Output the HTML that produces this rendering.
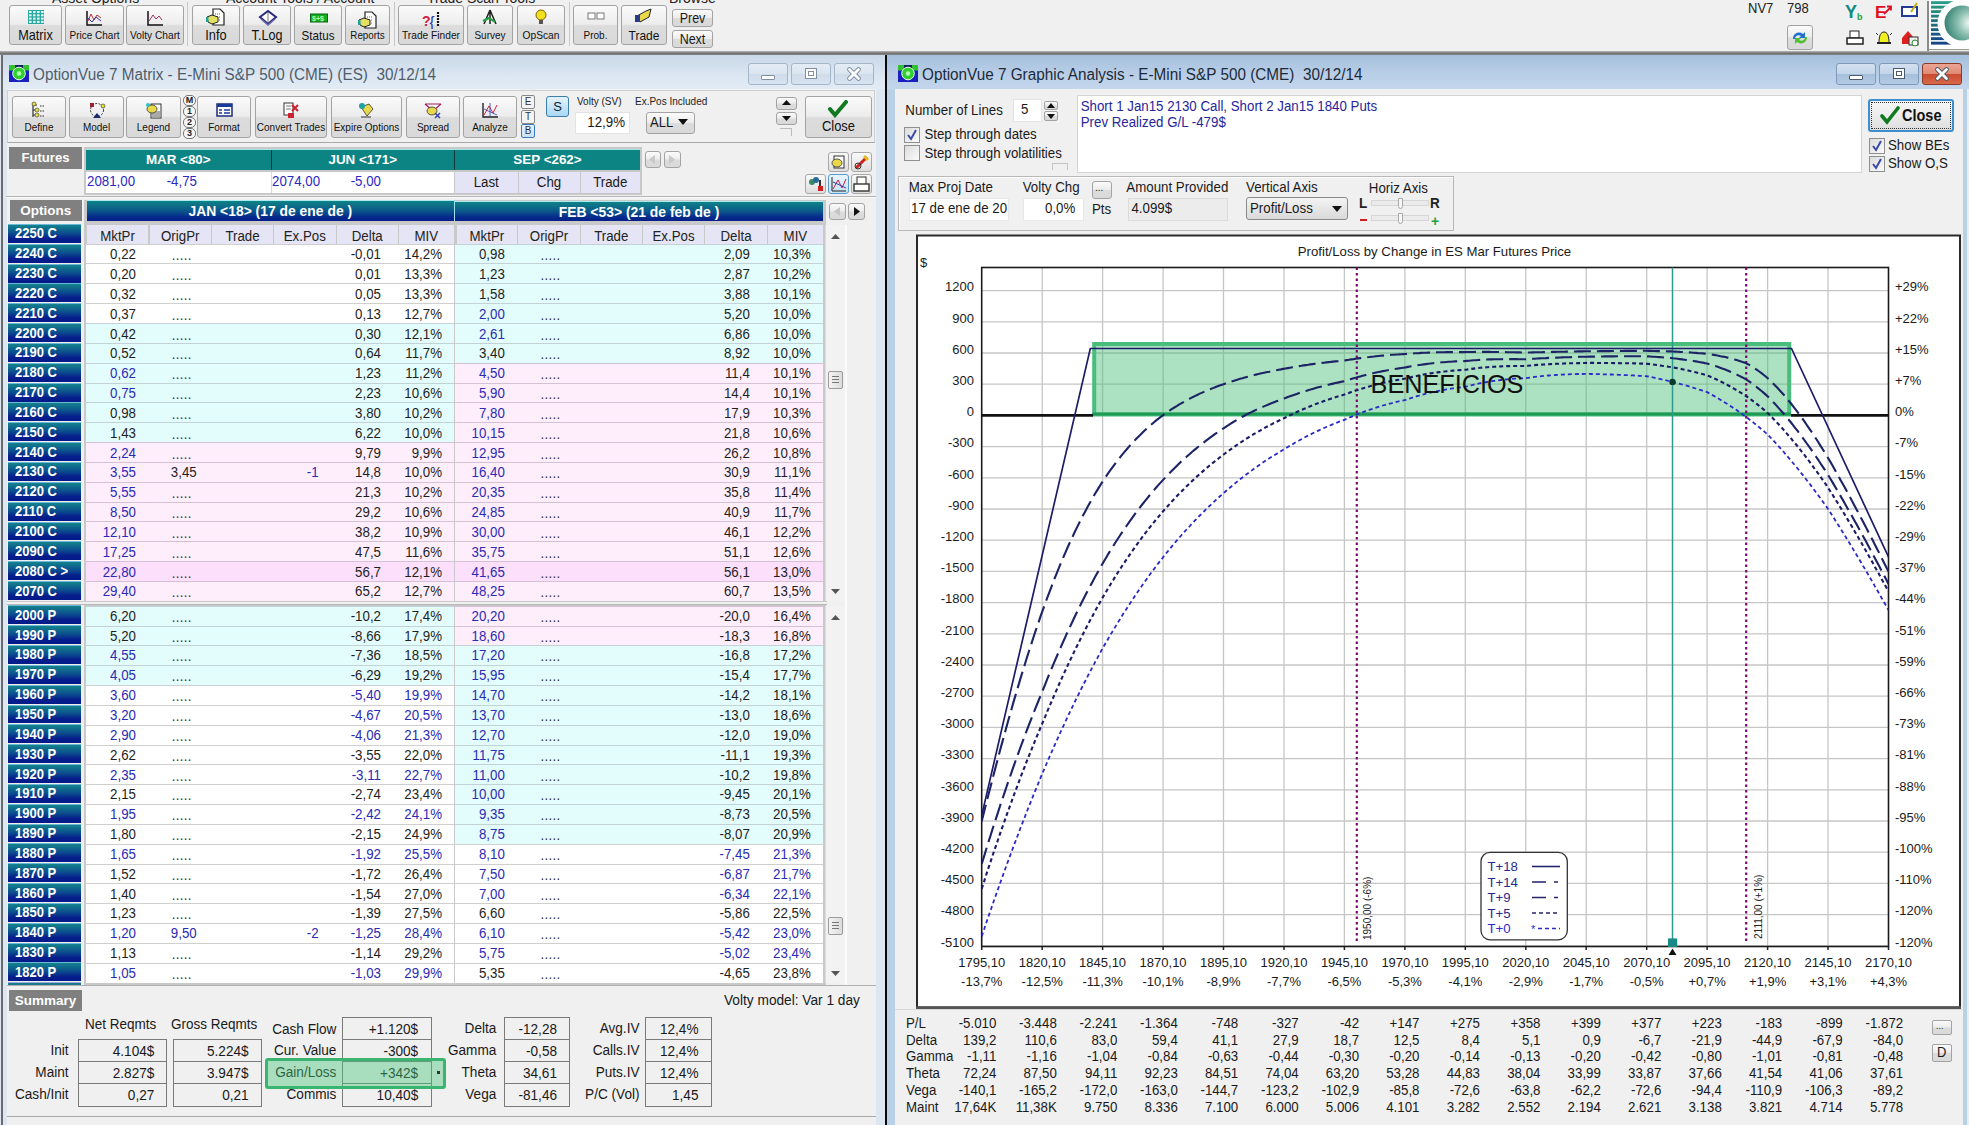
<!DOCTYPE html><html><head><meta charset="utf-8"><style>
html,body{margin:0;padding:0;}
body{width:1969px;height:1125px;position:relative;overflow:hidden;background:#f0f0f0;font-family:"Liberation Sans",sans-serif;color:#1a1a1a;}
div{box-sizing:border-box;}
.t{position:absolute;white-space:pre;height:20px;line-height:20px;font-size:13.3px;transform:scaleY(1.1);}
.btn{position:absolute;border:1px solid #a3a3a3;border-radius:3px;background:linear-gradient(#fbfbfb 0%,#ececec 48%,#dcdcdc 52%,#d9d9d9 100%);}
.tv{transform:scaleY(1.1);}
.hdr{position:absolute;color:#fff;font-weight:bold;font-size:13.3px;text-align:center;line-height:19px;}
</style></head><body>
<div class="t" style="left:52px;top:-13.5px;font-size:14px;color:#222;">Asset Options</div>
<div class="t" style="left:226px;top:-13.5px;font-size:14px;color:#222;">Account Tools / Account</div>
<div class="t" style="left:427px;top:-13.5px;font-size:14px;color:#222;">Trade Scan Tools</div>
<div class="t" style="left:669px;top:-13.5px;font-size:14px;color:#222;">Browse</div>
<div class="btn" style="left:9px;top:5px;width:53px;height:40px;"></div>
<div class="t" style="left:9px;width:53px;text-align:center;top:25.5px;font-size:12.7px;color:#111;">Matrix</div>
<svg style="position:absolute;left:26.0px;top:9.0px" width="20" height="18" viewBox="0 0 20 18"><rect x="2" y="1" width="16" height="14" fill="#2aa8a0"/><rect x="3" y="2.0" width="2.6" height="2" fill="#e8fff8"/><rect x="3" y="5.3" width="2.6" height="2" fill="#e8fff8"/><rect x="3" y="8.6" width="2.6" height="2" fill="#e8fff8"/><rect x="3" y="11.899999999999999" width="2.6" height="2" fill="#e8fff8"/><rect x="7" y="2.0" width="2.6" height="2" fill="#e8fff8"/><rect x="7" y="5.3" width="2.6" height="2" fill="#e8fff8"/><rect x="7" y="8.6" width="2.6" height="2" fill="#e8fff8"/><rect x="7" y="11.899999999999999" width="2.6" height="2" fill="#e8fff8"/><rect x="11" y="2.0" width="2.6" height="2" fill="#e8fff8"/><rect x="11" y="5.3" width="2.6" height="2" fill="#e8fff8"/><rect x="11" y="8.6" width="2.6" height="2" fill="#e8fff8"/><rect x="11" y="11.899999999999999" width="2.6" height="2" fill="#e8fff8"/><rect x="15" y="2.0" width="2.6" height="2" fill="#e8fff8"/><rect x="15" y="5.3" width="2.6" height="2" fill="#e8fff8"/><rect x="15" y="8.6" width="2.6" height="2" fill="#e8fff8"/><rect x="15" y="11.899999999999999" width="2.6" height="2" fill="#e8fff8"/></svg>
<div class="btn" style="left:65px;top:5px;width:59px;height:40px;"></div>
<div class="t" style="left:65px;width:59px;text-align:center;top:25.5px;font-size:10px;color:#111;">Price Chart</div>
<svg style="position:absolute;left:84.0px;top:9.0px" width="20" height="18" viewBox="0 0 20 18"><path d="M3 2 V16 H18" stroke="#111" stroke-width="1.5" fill="none"/><path d="M4 12 L7 5 L10 11 L13 6 L17 9" stroke="#c03030" fill="none"/><path d="M4 9 L8 13 L12 8 L17 12" stroke="#3030a0" fill="none"/></svg>
<div class="btn" style="left:126px;top:5px;width:58px;height:40px;"></div>
<div class="t" style="left:126px;width:58px;text-align:center;top:25.5px;font-size:10.2px;color:#111;">Volty Chart</div>
<svg style="position:absolute;left:145.0px;top:9.0px" width="20" height="18" viewBox="0 0 20 18"><path d="M3 2 V16 H18" stroke="#111" stroke-width="1.5" fill="none"/><path d="M4 12 L8 6 L11 10 L14 7 L17 11" stroke="#a03060" fill="none"/></svg>
<div style="position:absolute;left:187px;top:2px;width:1px;height:44px;background:#c8c8c8"></div>
<div class="btn" style="left:192px;top:5px;width:48px;height:40px;"></div>
<div class="t" style="left:192px;width:48px;text-align:center;top:25.5px;font-size:12.8px;color:#111;">Info</div>
<svg style="position:absolute;left:206.0px;top:8.0px" width="20" height="18" viewBox="0 0 20 18"><path d="M7 1 H14 L18 5 V17 H7 Z" fill="#fff" stroke="#222" stroke-width="1.2"/><path d="M9 6h6M9 9h6M9 12h6" stroke="#666" stroke-dasharray="1 1"/><path d="M1 9 L6 7 L12 9 L12 14 L6 16 L2 14 Z" fill="#e6e060" stroke="#222" stroke-width="1"/><rect x="0" y="9" width="2.5" height="5" fill="#20a0a0"/></svg>
<div class="btn" style="left:243px;top:5px;width:48px;height:40px;"></div>
<div class="t" style="left:243px;width:48px;text-align:center;top:25.5px;font-size:12.6px;color:#111;">T.Log</div>
<svg style="position:absolute;left:257.5px;top:9.0px" width="20" height="18" viewBox="0 0 20 18"><path d="M2 8 L10 2 L18 8 L10 15 Z" fill="#fff" stroke="#2a2a7a" stroke-width="2"/><path d="M3 10 L10 16 L17 10" fill="none" stroke="#6a6ab0" stroke-width="1.5"/><path d="M10 3 V14" stroke="#555" stroke-width=".8"/></svg>
<div class="btn" style="left:294px;top:5px;width:48px;height:40px;"></div>
<div class="t" style="left:294px;width:48px;text-align:center;top:25.5px;font-size:11.6px;color:#111;">Status</div>
<svg style="position:absolute;left:309.0px;top:9.0px" width="20" height="18" viewBox="0 0 20 18"><rect x="1.5" y="5" width="17" height="8" fill="#10b020" stroke="#086010"/><text x="3" y="12" font-size="7" fill="#b0ffb0" font-family="Liberation Sans" font-weight="bold">$+$</text></svg>
<div class="btn" style="left:345px;top:5px;width:45px;height:40px;"></div>
<div class="t" style="left:345px;width:45px;text-align:center;top:25.5px;font-size:9.8px;color:#111;">Reports</div>
<svg style="position:absolute;left:358.0px;top:10.5px" width="20" height="18" viewBox="0 0 20 18"><path d="M7 1 H14 L18 5 V17 H7 Z" fill="#fff" stroke="#222" stroke-width="1.2"/><path d="M9 6h6M9 9h6M9 12h6" stroke="#666" stroke-dasharray="1 1"/><path d="M1 9 L6 7 L12 9 L12 14 L6 16 L2 14 Z" fill="#e6e060" stroke="#222" stroke-width="1"/><rect x="0" y="9" width="2.5" height="5" fill="#20a0a0"/></svg>
<div style="position:absolute;left:394px;top:2px;width:1px;height:44px;background:#c8c8c8"></div>
<div class="btn" style="left:398px;top:5px;width:66px;height:40px;"></div>
<div class="t" style="left:398px;width:66px;text-align:center;top:25.5px;font-size:10.2px;color:#111;">Trade Finder</div>
<svg style="position:absolute;left:421.0px;top:10.5px" width="20" height="18" viewBox="0 0 20 18"><text x="1" y="15" font-size="14" font-weight="bold" fill="#d02040" font-family="Liberation Sans">?</text><text x="8.5" y="15.5" font-size="15" fill="#2a2ab0" font-family="Liberation Sans">{</text><path d="M17 1v15" stroke="#111" stroke-width="2.2" stroke-dasharray="2 1"/></svg>
<div class="btn" style="left:467px;top:5px;width:46px;height:40px;"></div>
<div class="t" style="left:467px;width:46px;text-align:center;top:25.5px;font-size:10px;color:#111;">Survey</div>
<svg style="position:absolute;left:480.0px;top:8.0px" width="20" height="18" viewBox="0 0 20 18"><path d="M10 2 L4 16 M10 2 L16 16 M10 2 V16" stroke="#222" stroke-width="1.5"/><path d="M3 13 L9 10 L15 14" stroke="#20a040" stroke-width="2" fill="none"/></svg>
<div class="btn" style="left:517px;top:5px;width:48px;height:40px;"></div>
<div class="t" style="left:517px;width:48px;text-align:center;top:25.5px;font-size:10.2px;color:#111;">OpScan</div>
<svg style="position:absolute;left:531.0px;top:8.0px" width="20" height="18" viewBox="0 0 20 18"><circle cx="10" cy="7" r="5" fill="#f0e020" stroke="#806000"/><rect x="8" y="12" width="4" height="4" fill="#555"/></svg>
<div style="position:absolute;left:569px;top:2px;width:1px;height:44px;background:#c8c8c8"></div>
<div class="btn" style="left:573px;top:5px;width:45px;height:40px;"></div>
<div class="t" style="left:573px;width:45px;text-align:center;top:25.5px;font-size:10px;color:#111;">Prob.</div>
<svg style="position:absolute;left:586.0px;top:8.0px" width="20" height="18" viewBox="0 0 20 18"><rect x="2" y="5" width="7" height="6" fill="#fff" stroke="#777"/><rect x="11" y="5" width="7" height="6" fill="#fff" stroke="#777"/></svg>
<div class="btn" style="left:621px;top:5px;width:46px;height:40px;"></div>
<div class="t" style="left:621px;width:46px;text-align:center;top:25.5px;font-size:12px;color:#111;">Trade</div>
<svg style="position:absolute;left:634.0px;top:7.0px" width="20" height="18" viewBox="0 0 20 18"><path d="M3 9 L12 4 L17 2 L15 10 L6 15 Z" fill="#e8d84a" stroke="#223"/><rect x="1" y="8" width="5" height="7" fill="#2a3a8a"/></svg>
<div class="btn" style="left:672px;top:9px;width:41px;height:18px;"></div><div class="t" style="left:672px;width:41px;text-align:center;top:9.3px;font-size:12.5px">Prev</div>
<div class="btn" style="left:672px;top:30px;width:41px;height:18px;"></div><div class="t" style="left:672px;width:41px;text-align:center;top:30.3px;font-size:12.5px">Next</div>
<div class="t" style="left:1748px;top:-1px;font-size:13px;color:#222">NV7</div><div class="t" style="left:1787px;top:-1px;font-size:13px;color:#222">798</div>
<div class="btn" style="left:1787px;top:25px;width:26px;height:25px;border-radius:3px"></div>
<svg style="position:absolute;left:1790.0px;top:29.0px" width="20" height="18" viewBox="0 0 20 18"><path d="M3 10 C3 4 9 2 13 5 L15 3 L15 9 L9 9 L11 7 C8 5 5 7 5 10 Z" fill="#2070d0"/><path d="M17 8 C17 14 11 16 7 13 L5 15 L5 9 L11 9 L9 11 C12 13 15 11 15 8 Z" fill="#50c030"/></svg>
<svg style="position:absolute;left:1845.0px;top:2.0px" width="20" height="18" viewBox="0 0 20 18"><text x="0" y="15.5" font-size="18" font-weight="bold" fill="#108a80" font-family="Liberation Sans">Y</text><text x="12" y="17.5" font-size="9" font-weight="bold" fill="#20a040" font-family="Liberation Sans">b</text></svg>
<svg style="position:absolute;left:1874.0px;top:2.0px" width="20" height="18" viewBox="0 0 20 18"><text x="1" y="15.5" font-size="17" font-weight="bold" fill="#e01020" font-family="Liberation Sans">E</text><path d="M10 12 L17 5 M13 4.5h4v4" stroke="#e01020" stroke-width="1.8" fill="none"/></svg>
<svg style="position:absolute;left:1900.0px;top:1.0px" width="20" height="18" viewBox="0 0 20 18"><rect x="2" y="6" width="15" height="9" fill="#fff" stroke="#223a9a" stroke-width="2"/><path d="M11 11 L17 2" stroke="#c0b010" stroke-width="2"/></svg>
<svg style="position:absolute;left:1845.0px;top:29.0px" width="20" height="18" viewBox="0 0 20 18"><rect x="5" y="2" width="9" height="7" fill="#fff" stroke="#222"/><rect x="2" y="9" width="16" height="6" fill="#fff" stroke="#222" stroke-width="1.5"/></svg>
<svg style="position:absolute;left:1874.0px;top:29.0px" width="20" height="18" viewBox="0 0 20 18"><path d="M5 14 C5 6 7 3 10 3 C13 3 15 6 15 14 Z" fill="#f0f020" stroke="#222"/><path d="M3 14h14" stroke="#222" stroke-width="2"/><path d="M2 4l2 2M18 4l-2 2" stroke="#333"/></svg>
<svg style="position:absolute;left:1900.0px;top:29.0px" width="20" height="18" viewBox="0 0 20 18"><path d="M2 9 L8 2 L14 9 V15 H2 Z" fill="#e02020"/><rect x="9" y="8" width="9" height="8" fill="#eee" stroke="#333"/><circle cx="15" cy="14" r="3" fill="#fff" stroke="#2a8a2a"/></svg>
<div style="position:absolute;left:1927px;top:1px;width:2px;height:50px;background:#8a8a8a"></div>
<svg style="position:absolute;left:1929px;top:0" width="40" height="50" viewBox="0 0 40 50"><rect x="0" y="0" width="40" height="50" fill="#ffffff"/><rect x="2" y="1.2" width="22" height="2.9" fill="#2a9a88"/><rect x="2" y="5.7" width="22" height="2.9" fill="#28907f"/><rect x="2" y="10.2" width="22" height="2.9" fill="#268a80"/><rect x="2" y="14.7" width="22" height="2.9" fill="#247f80"/><rect x="2" y="19.2" width="22" height="2.9" fill="#227580"/><rect x="2" y="23.7" width="22" height="2.9" fill="#1f6a82"/><rect x="2" y="28.2" width="22" height="2.9" fill="#1c5f84"/><rect x="2" y="32.7" width="22" height="2.9" fill="#1a5586"/><rect x="2" y="37.2" width="22" height="2.9" fill="#184c86"/><rect x="2" y="41.7" width="22" height="2.9" fill="#164484"/><circle cx="32" cy="23.5" r="23.5" fill="#fff"/><defs><radialGradient id="sph" cx="0.72" cy="0.5" r="0.75"><stop offset="0" stop-color="#f4fbf8"/><stop offset="0.45" stop-color="#8cc0b0"/><stop offset="1" stop-color="#2f7f70"/></radialGradient></defs><circle cx="33" cy="23" r="17.5" fill="url(#sph)"/><rect x="0" y="49" width="40" height="1.5" fill="#9a9a9a"/></svg>
<div style="position:absolute;left:0;top:51px;width:1969px;height:4px;background:linear-gradient(#b8b8b8,#6e6e6e 60%,#8a8a8a)"></div>
<div style="position:absolute;left:0;top:55px;width:886px;height:1070px;background:#dde7f1;"></div>
<div style="position:absolute;left:1px;top:55px;width:2px;height:1070px;background:#6a6a6a;"></div>
<div style="position:absolute;left:3px;top:55px;width:882px;height:34px;background:linear-gradient(#c9d8e8,#dbe6f1 60%,#e3ecf5);"></div>
<div style="position:absolute;left:885px;top:55px;width:2px;height:1070px;background:#0a0a0a;"></div>
<div style="position:absolute;left:887px;top:55px;width:1082px;height:1070px;background:#b9d1e6;"></div>
<div style="position:absolute;left:887px;top:55px;width:1082px;height:34px;background:linear-gradient(#a4bfdc,#b7cde6 50%,#c3d6ec);"></div>
<svg style="position:absolute;left:9px;top:65px" width="20" height="17" viewBox="0 0 20 17"><rect x="0" y="0" width="20" height="17" fill="#1a20c0"/><rect x="0" y="0" width="6" height="5.5" fill="#30c030"/><rect x="14" y="0" width="6" height="5.5" fill="#30c030"/><rect x="6" y="0" width="8" height="3" fill="#102060"/><circle cx="10" cy="8.5" r="6.3" fill="#30d030" stroke="#e8ffe8" stroke-width="1"/><circle cx="10" cy="8.5" r="2.3" fill="#b0ffb0"/></svg>
<div class="t" style="left:33px;top:64px;font-size:15.3px;color:#4f5d6b;">OptionVue 7 Matrix - E-Mini S&amp;P 500 (CME) (ES)  30/12/14</div>
<svg style="position:absolute;left:898px;top:65px" width="20" height="17" viewBox="0 0 20 17"><rect x="0" y="0" width="20" height="17" fill="#1a20c0"/><rect x="0" y="0" width="6" height="5.5" fill="#30c030"/><rect x="14" y="0" width="6" height="5.5" fill="#30c030"/><rect x="6" y="0" width="8" height="3" fill="#102060"/><circle cx="10" cy="8.5" r="6.3" fill="#30d030" stroke="#e8ffe8" stroke-width="1"/><circle cx="10" cy="8.5" r="2.3" fill="#b0ffb0"/></svg>
<div class="t" style="left:922px;top:64px;font-size:15.3px;color:#1c2a3a;">OptionVue 7 Graphic Analysis - E-Mini S&amp;P 500 (CME)  30/12/14</div>
<div style="position:absolute;left:748.0px;top:63px;width:40px;height:22px;border:1px solid #a4b6ca;border-radius:3px;background:linear-gradient(#e4ecf5 0%,#dae5f0 48%,#cfdcea 52%,#d8e3ef 100%);"></div>
<div style="position:absolute;left:761.0px;top:75px;width:14px;height:5px;background:#fff;border:1px solid #8090a0;border-radius:1px"></div>
<div style="position:absolute;left:790.8px;top:63px;width:40px;height:22px;border:1px solid #a4b6ca;border-radius:3px;background:linear-gradient(#e4ecf5 0%,#dae5f0 48%,#cfdcea 52%,#d8e3ef 100%);"></div>
<div style="position:absolute;left:804.8px;top:68px;width:12px;height:11px;background:#fff;border:1px solid #8090a0;"><div style="margin:2px;width:6px;height:5px;border:1px solid #8090a0"></div></div>
<div style="position:absolute;left:833.6px;top:63px;width:40px;height:22px;border:1px solid #a4b6ca;border-radius:3px;background:linear-gradient(#e4ecf5 0%,#dae5f0 48%,#cfdcea 52%,#d8e3ef 100%);"></div>
<svg style="position:absolute;left:845.6px;top:67px" width="16" height="14" viewBox="0 0 16 14"><path d="M3.5 2.5 L12.5 11.5 M12.5 2.5 L3.5 11.5" stroke="#8090a0" stroke-width="4.6" stroke-linecap="round"/><path d="M3.5 2.5 L12.5 11.5 M12.5 2.5 L3.5 11.5" stroke="#fff" stroke-width="2.8" stroke-linecap="round"/></svg>
<div style="position:absolute;left:1836.0px;top:63px;width:40px;height:22px;border:1px solid #7f9ab8;border-radius:3px;background:linear-gradient(#d3e1f0 0%,#c3d5e9 48%,#a6bfdc 52%,#b4cbe5 100%);"></div>
<div style="position:absolute;left:1849.0px;top:75px;width:14px;height:5px;background:#fff;border:1px solid #4a5a6c;border-radius:1px"></div>
<div style="position:absolute;left:1878.8px;top:63px;width:40px;height:22px;border:1px solid #7f9ab8;border-radius:3px;background:linear-gradient(#d3e1f0 0%,#c3d5e9 48%,#a6bfdc 52%,#b4cbe5 100%);"></div>
<div style="position:absolute;left:1892.8px;top:68px;width:12px;height:11px;background:#fff;border:1px solid #4a5a6c;"><div style="margin:2px;width:6px;height:5px;border:1px solid #4a5a6c"></div></div>
<div style="position:absolute;left:1921.6px;top:63px;width:40px;height:22px;border:1px solid #8c3a28;border-radius:3px;background:linear-gradient(#eba595 0%,#e08a74 48%,#cc4a2e 52%,#d86a4c 100%);"></div>
<svg style="position:absolute;left:1933.6px;top:67px" width="16" height="14" viewBox="0 0 16 14"><path d="M3.5 2.5 L12.5 11.5 M12.5 2.5 L3.5 11.5" stroke="#4a5a6c" stroke-width="4.6" stroke-linecap="round"/><path d="M3.5 2.5 L12.5 11.5 M12.5 2.5 L3.5 11.5" stroke="#fff" stroke-width="2.8" stroke-linecap="round"/></svg>
<div style="position:absolute;left:7px;top:89px;width:869px;height:1036px;background:#f0f0f0;"></div>
<div style="position:absolute;left:895px;top:89px;width:1068px;height:1036px;background:#f0f0f0;"></div>
<div style="position:absolute;left:7px;top:90px;width:868px;height:53px;border:1px solid #d0d0d0;border-bottom-color:#a8a8a8;background:#f0f0f0;"></div>
<div class="btn" style="left:12px;top:96px;width:54px;height:42px;"></div>
<div class="t" style="left:12px;width:54px;text-align:center;top:117.5px;font-size:10px;color:#111;">Define</div>
<svg style="position:absolute;left:29.0px;top:101px" width="20" height="18" viewBox="0 0 20 18"><path d="M4 2v14M4 4h4M4 9h4M4 14h4" stroke="#333" stroke-width="1.2"/><circle cx="5" cy="3" r="2" fill="#e8e040" stroke="#333" stroke-width=".6"/><circle cx="8" cy="9" r="2" fill="#e8e040" stroke="#333" stroke-width=".6"/><circle cx="8" cy="14" r="2" fill="#e8e040" stroke="#333" stroke-width=".6"/><path d="M11 5h5M11 10h5M11 15h5" stroke="#333" stroke-dasharray="1.5 1"/></svg>
<div class="btn" style="left:69px;top:96px;width:55px;height:42px;"></div>
<div class="t" style="left:69px;width:55px;text-align:center;top:117.5px;font-size:10px;color:#111;">Model</div>
<svg style="position:absolute;left:86.5px;top:101px" width="20" height="18" viewBox="0 0 20 18"><circle cx="10" cy="9" r="6.5" fill="none" stroke="#333" stroke-dasharray="2 1.5"/><rect x="3" y="2" width="4" height="4" fill="#a02030"/><circle cx="16" cy="5" r="2" fill="#e0e030" stroke="#333" stroke-width=".6"/><path d="M6 17 L10 12 L14 17Z" fill="#1a2a6a"/></svg>
<div class="btn" style="left:126px;top:96px;width:55px;height:42px;"></div>
<div class="t" style="left:126px;width:55px;text-align:center;top:117.5px;font-size:10px;color:#111;">Legend</div>
<svg style="position:absolute;left:143.5px;top:101px" width="20" height="18" viewBox="0 0 20 18"><rect x="7" y="3" width="10" height="14" fill="#fff" stroke="#333"/><path d="M8 11h8M8 13h8M8 15h8" stroke="#555"/><ellipse cx="8" cy="8" rx="5" ry="4" fill="#e8d84a" stroke="#333" stroke-width=".8"/><circle cx="4" cy="4" r="2" fill="#30c0c0"/></svg>
<div style="position:absolute;left:183px;top:95px;width:13px;height:11px;border:1px solid #777;border-radius:5px;background:#f6f6f6;font-size:9px;line-height:9px;text-align:center;color:#222;font-weight:bold">M</div>
<div style="position:absolute;left:183px;top:106px;width:13px;height:11px;border:1px solid #777;border-radius:5px;background:#f6f6f6;font-size:9px;line-height:9px;text-align:center;color:#222;font-weight:bold">1</div>
<div style="position:absolute;left:183px;top:117px;width:13px;height:11px;border:1px solid #777;border-radius:5px;background:#f6f6f6;font-size:9px;line-height:9px;text-align:center;color:#222;font-weight:bold">2</div>
<div style="position:absolute;left:183px;top:128px;width:13px;height:11px;border:1px solid #777;border-radius:5px;background:#f6f6f6;font-size:9px;line-height:9px;text-align:center;color:#222;font-weight:bold">3</div>
<div class="btn" style="left:197px;top:96px;width:54px;height:42px;"></div>
<div class="t" style="left:197px;width:54px;text-align:center;top:117.5px;font-size:10px;color:#111;">Format</div>
<svg style="position:absolute;left:214.0px;top:101px" width="20" height="18" viewBox="0 0 20 18"><rect x="3" y="3" width="15" height="12" fill="#fff" stroke="#1a2a7a" stroke-width="1.5"/><rect x="3" y="3" width="15" height="3" fill="#1a3a9a"/><path d="M5 9h3M5 12h3M10 9h6M10 12h6" stroke="#1a3a9a" stroke-width="1.4"/></svg>
<div class="btn" style="left:255px;top:96px;width:72px;height:42px;"></div>
<div class="t" style="left:255px;width:72px;text-align:center;top:117.5px;font-size:10px;color:#111;">Convert Trades</div>
<svg style="position:absolute;left:281.0px;top:101px" width="20" height="18" viewBox="0 0 20 18"><rect x="3" y="2" width="9" height="12" fill="#fff" stroke="#333"/><path d="M5 5h5M5 8h5" stroke="#777"/><path d="M11 4 L17 10 M17 4 L11 10" stroke="#d02030" stroke-width="2"/><rect x="7" y="12" width="6" height="5" fill="#d02030"/></svg>
<div class="btn" style="left:331px;top:96px;width:71px;height:42px;"></div>
<div class="t" style="left:331px;width:71px;text-align:center;top:117.5px;font-size:10px;color:#111;">Expire Options</div>
<svg style="position:absolute;left:356.5px;top:101px" width="20" height="18" viewBox="0 0 20 18"><path d="M4 6 L12 3 L16 8 L10 15Z" fill="#e8d84a" stroke="#333" stroke-width=".8"/><circle cx="5" cy="5" r="3" fill="#20a0a0"/><path d="M4 16h10" stroke="#333"/></svg>
<div class="btn" style="left:406px;top:96px;width:54px;height:42px;"></div>
<div class="t" style="left:406px;width:54px;text-align:center;top:117.5px;font-size:10px;color:#111;">Spread</div>
<svg style="position:absolute;left:423.0px;top:101px" width="20" height="18" viewBox="0 0 20 18"><path d="M2 3 L18 3 M2 3 L10 10 L18 3" stroke="#a02060" stroke-width="1.2" fill="none"/><ellipse cx="9" cy="10" rx="5" ry="4" fill="#e8d84a" stroke="#333" stroke-width=".8"/><path d="M12 12 L17 17 M17 12 L12 17" stroke="#3040b0" stroke-width="1.5"/></svg>
<div class="btn" style="left:463px;top:96px;width:54px;height:42px;"></div>
<div class="t" style="left:463px;width:54px;text-align:center;top:117.5px;font-size:10px;color:#111;">Analyze</div>
<svg style="position:absolute;left:480.0px;top:101px" width="20" height="18" viewBox="0 0 20 18"><path d="M3 2 V16 H18" stroke="#222" stroke-width="1.4" fill="none"/><path d="M4 14 L9 5 L13 12 L17 4" stroke="#d02040" fill="none"/><path d="M4 8 L17 14 M10 2 L10 16" stroke="#3040b0" stroke-width=".8"/></svg>
<div style="position:absolute;left:521px;top:95.0px;width:14px;height:14px;border:1px solid #888;border-radius:2px;background:#f4f4f4;font-size:10px;line-height:12px;text-align:center;color:#333">E</div>
<div style="position:absolute;left:521px;top:109.5px;width:14px;height:14px;border:1px solid #888;border-radius:2px;background:#f4f4f4;font-size:10px;line-height:12px;text-align:center;color:#333">T</div>
<div style="position:absolute;left:521px;top:124.0px;width:14px;height:14px;border:1px solid #3a7ac0;border-radius:2px;background:linear-gradient(#eaf4ff,#c8e0f8);font-size:10px;line-height:12px;text-align:center;color:#333">B</div>
<div style="position:absolute;left:546px;top:96px;width:23px;height:21px;border:1px solid #3c7fb1;border-radius:3px;background:linear-gradient(#e4f3fc,#a9d8f4);font-size:13px;line-height:19px;text-align:center;color:#123">S</div>
<div class="t" style="left:577px;top:92px;font-size:10px;color:#222">Volty (SV)</div>
<div style="position:absolute;left:575px;top:112px;width:55px;height:22px;background:#fff;border:1px solid #e3e3e3"></div>
<div class="t" style="left:560px;width:65px;text-align:right;top:113px;font-size:13.3px">12,9%</div>
<div class="t" style="left:635px;top:92px;font-size:10px;color:#222">Ex.Pos Included</div>
<div class="btn" style="left:646px;top:112px;width:49px;height:22px;"></div><div class="t" style="left:650px;top:113px;font-size:13px">ALL</div>
<svg style="position:absolute;left:678px;top:119px" width="10" height="7"><path d="M0 0 H10 L5 6Z" fill="#111"/></svg>
<div class="btn" style="left:776px;top:97px;width:21px;height:13px;"></div><svg style="position:absolute;left:782px;top:100px" width="9" height="6"><path d="M0 5 H9 L4.5 0Z" fill="#111"/></svg>
<div class="btn" style="left:776px;top:112px;width:21px;height:13px;"></div><svg style="position:absolute;left:782px;top:116px" width="9" height="6"><path d="M0 0 H9 L4.5 5Z" fill="#111"/></svg>
<div style="position:absolute;left:780px;top:128px;width:12px;height:8px;border-top:1px solid #bbb;border-right:1px solid #bbb"></div>
<div class="btn" style="left:805px;top:96px;width:67px;height:42px;"></div>
<svg style="position:absolute;left:827px;top:100px" width="22" height="18" viewBox="0 0 22 18"><path d="M3 9 L8 15 L19 2" stroke="#107a20" stroke-width="4" fill="none" stroke-linecap="round"/></svg>
<div class="t" style="left:805px;width:67px;text-align:center;top:117px;font-size:12.9px;color:#111">Close</div>
<div style="position:absolute;left:9px;top:147px;width:73px;height:22px;background:#808080;"></div>
<div class="hdr" style="left:9px;top:148px;width:73px;font-size:13.1px">Futures</div>
<div style="position:absolute;left:84px;top:147px;width:558px;height:47.5px;background:#c8c8c8;"></div>
<div style="position:absolute;left:86px;top:149px;width:554px;height:21px;background:#0c8484;border-top:1px solid #9ee8e8;"></div>
<div class="hdr" style="left:86px;top:150px;width:184.5px;font-size:13.4px">MAR &lt;80&gt;</div>
<div class="hdr" style="left:271.5px;top:150px;width:182.5px;font-size:13.4px">JUN &lt;171&gt;</div>
<div class="hdr" style="left:455px;top:150px;width:185px;font-size:13.4px">SEP &lt;262&gt;</div>
<div style="position:absolute;left:270.5px;top:150px;width:1px;height:20px;background:#063a3a"></div>
<div style="position:absolute;left:454px;top:150px;width:1px;height:20px;background:#063a3a"></div>
<div style="position:absolute;left:86px;top:172px;width:368px;height:21px;background:#fff;"></div>
<div class="t" style="left:87px;top:172px;color:#2a2ac0">2081,00</div>
<div class="t" style="left:-103px;width:300px;text-align:right;top:172px;color:#2a2ac0">-4,75</div>
<div class="t" style="left:272px;top:172px;color:#2a2ac0">2074,00</div>
<div class="t" style="left:81px;width:300px;text-align:right;top:172px;color:#2a2ac0">-5,00</div>
<div style="position:absolute;left:270.5px;top:172px;width:1px;height:21px;background:#d8d8d8"></div>
<div style="position:absolute;left:455px;top:172px;width:62.5px;height:21px;background:#e4e4f6;"></div>
<div class="t" style="left:455px;width:62.5px;text-align:center;top:173px">Last</div>
<div style="position:absolute;left:518.5px;top:172px;width:61.0px;height:21px;background:#e4e4f6;"></div>
<div class="t" style="left:518.5px;width:61.0px;text-align:center;top:173px">Chg</div>
<div style="position:absolute;left:580.5px;top:172px;width:59.5px;height:21px;background:#e4e4f6;"></div>
<div class="t" style="left:580.5px;width:59.5px;text-align:center;top:173px">Trade</div>
<div style="position:absolute;left:642px;top:147px;width:40px;height:49px;background:#f0f0f0;"></div>
<div class="btn" style="left:644.5px;top:151px;width:16.5px;height:16.5px;"></div>
<div class="btn" style="left:664px;top:151px;width:16.5px;height:16.5px;"></div>
<svg style="position:absolute;left:649px;top:155px" width="7" height="9"><path d="M6 0 V9 L0 4.5Z" fill="#c8c8c8"/></svg>
<svg style="position:absolute;left:669px;top:155px" width="7" height="9"><path d="M0 0 V9 L6 4.5Z" fill="#c8c8c8"/></svg>
<div style="position:absolute;left:828px;top:152px;width:21px;height:20px;border:1px solid #a8a8a8;border-radius:3px;background:linear-gradient(#fafafa,#dedede)"></div>
<svg style="position:absolute;left:830px;top:154px" width="17" height="16" viewBox="0 0 17 16"><rect x="4" y="2" width="10" height="12" fill="#fff" stroke="#333"/><ellipse cx="7" cy="9" rx="5" ry="4" fill="#e8d84a" stroke="#333" stroke-width=".8"/></svg>
<div style="position:absolute;left:851px;top:152px;width:21px;height:20px;border:1px solid #a8a8a8;border-radius:3px;background:linear-gradient(#fafafa,#dedede)"></div>
<svg style="position:absolute;left:853px;top:154px" width="17" height="16" viewBox="0 0 17 16"><path d="M3 14 L14 3" stroke="#d02020" stroke-width="3"/><path d="M11 2 L15 6" stroke="#e0c020" stroke-width="3"/><circle cx="5" cy="12" r="3" fill="none" stroke="#333"/></svg>
<div style="position:absolute;left:805px;top:174px;width:21px;height:20px;border:1px solid #a8a8a8;border-radius:3px;background:linear-gradient(#fafafa,#dedede)"></div>
<svg style="position:absolute;left:807px;top:176px" width="17" height="16" viewBox="0 0 17 16"><circle cx="5" cy="6" r="3" fill="#3a8a6a"/><circle cx="9" cy="4" r="3" fill="#2a6a9a"/><path d="M13 4 V10" stroke="#333" stroke-width="2"/><rect x="11" y="10" width="5" height="5" fill="#d02020"/></svg>
<div style="position:absolute;left:828px;top:174px;width:21px;height:20px;border:1px solid #5a9ad0;border-radius:3px;background:linear-gradient(#e8f4fc,#c6e2f6)"></div>
<svg style="position:absolute;left:830px;top:176px" width="17" height="16" viewBox="0 0 17 16"><path d="M2 1 V15 H16" stroke="#222" fill="none"/><path d="M3 13 L8 4 L12 12 L16 3" stroke="#d02040" fill="none"/><path d="M3 6 L16 12" stroke="#3040b0"/></svg>
<div style="position:absolute;left:851px;top:174px;width:21px;height:20px;border:1px solid #a8a8a8;border-radius:3px;background:linear-gradient(#fafafa,#dedede)"></div>
<svg style="position:absolute;left:853px;top:176px" width="17" height="16" viewBox="0 0 17 16"><rect x="4" y="1" width="9" height="8" fill="#fff" stroke="#333"/><rect x="1" y="8" width="15" height="7" fill="#fff" stroke="#333" stroke-width="1.4"/></svg>
<div style="position:absolute;left:6px;top:196px;width:870px;height:1px;background:#b4b4b4;"></div><div style="position:absolute;left:6px;top:197px;width:870px;height:1px;background:#fafafa;"></div>
<div style="position:absolute;left:9.8px;top:200px;width:72px;height:21px;background:#808080;"></div>
<div class="hdr" style="left:9.8px;top:201px;width:72px;font-size:13.5px">Options</div>
<div style="position:absolute;left:84px;top:199.5px;width:742px;height:786px;background:#c9c9c9;"></div>
<div style="position:absolute;left:86.6px;top:200.3px;width:367.4px;height:20.69999999999999px;background:linear-gradient(#0e8286 0%,#0b5c8a 45%,#062a8c 80%,#041e88 100%);border-top:1px solid #a8ecf0;"></div>
<div class="hdr" style="left:86.6px;top:202.3px;width:367.4px;font-size:13.9px;transform:scaleY(1.08)">JAN &lt;18&gt; (17 de ene de )</div>
<div style="position:absolute;left:455px;top:201px;width:368px;height:20px;background:linear-gradient(#0e8286 0%,#0b5c8a 45%,#062a8c 80%,#041e88 100%);border-top:1px solid #a8ecf0;"></div>
<div class="hdr" style="left:455px;top:203px;width:368px;font-size:13.9px;transform:scaleY(1.08)">FEB &lt;53&gt; (21 de feb de )</div>
<div style="position:absolute;left:454px;top:200px;width:1px;height:21px;background:#9ee0f0"></div>
<div style="position:absolute;left:826px;top:198px;width:50px;height:788px;background:#f0f0f0;"></div>
<div class="btn" style="left:829px;top:203px;width:16.5px;height:16.5px;"></div><div class="btn" style="left:848px;top:203px;width:17px;height:16.5px;"></div>
<svg style="position:absolute;left:834px;top:207px" width="7" height="9"><path d="M6 0 V9 L0 4.5Z" fill="#c4c4c4"/></svg>
<svg style="position:absolute;left:854px;top:207px" width="7" height="9"><path d="M0 0 V9 L6 4.5Z" fill="#111"/></svg>
<div style="position:absolute;left:7px;top:222px;width:77px;height:764px;background:#f0f0f0;"></div>
<div style="position:absolute;left:8px;top:223.90px;width:73px;height:18.94px;background:linear-gradient(#14838c 0%,#0b4e8e 45%,#061f8c 75%,#031a88 100%);border-top:1px solid #6ab8d8;"></div>
<div class="t" style="left:15px;top:223.40px;font-size:13px;font-weight:bold;color:#fff;transform:scaleY(1.15)">2250 C</div>
<div style="position:absolute;left:86.6px;top:225.1px;width:61.9px;height:19px;background:#e5e5f5;"></div>
<div class="t" style="left:86.6px;width:61.9px;text-align:center;top:226.5px;color:#222">MktPr</div>
<div style="position:absolute;left:149.5px;top:225.1px;width:61.5px;height:19px;background:#e5e5f5;"></div>
<div class="t" style="left:149.5px;width:61.5px;text-align:center;top:226.5px;color:#222">OrigPr</div>
<div style="position:absolute;left:212.0px;top:225.1px;width:61.0px;height:19px;background:#e5e5f5;"></div>
<div class="t" style="left:212.0px;width:61.0px;text-align:center;top:226.5px;color:#222">Trade</div>
<div style="position:absolute;left:274.0px;top:225.1px;width:61.5px;height:19px;background:#e5e5f5;"></div>
<div class="t" style="left:274.0px;width:61.5px;text-align:center;top:226.5px;color:#222">Ex.Pos</div>
<div style="position:absolute;left:336.5px;top:225.1px;width:61.5px;height:19px;background:#e5e5f5;"></div>
<div class="t" style="left:336.5px;width:61.5px;text-align:center;top:226.5px;color:#222">Delta</div>
<div style="position:absolute;left:399.0px;top:225.1px;width:54.5px;height:19px;background:#e5e5f5;"></div>
<div class="t" style="left:399.0px;width:54.5px;text-align:center;top:226.5px;color:#222">MIV</div>
<div style="position:absolute;left:456.5px;top:225.1px;width:60.8px;height:19px;background:#e5e5f5;"></div>
<div class="t" style="left:456.5px;width:60.8px;text-align:center;top:226.5px;color:#222">MktPr</div>
<div style="position:absolute;left:518.3px;top:225.1px;width:61.5px;height:19px;background:#e5e5f5;"></div>
<div class="t" style="left:518.3px;width:61.5px;text-align:center;top:226.5px;color:#222">OrigPr</div>
<div style="position:absolute;left:580.8px;top:225.1px;width:61.0px;height:19px;background:#e5e5f5;"></div>
<div class="t" style="left:580.8px;width:61.0px;text-align:center;top:226.5px;color:#222">Trade</div>
<div style="position:absolute;left:642.8px;top:225.1px;width:61.5px;height:19px;background:#e5e5f5;"></div>
<div class="t" style="left:642.8px;width:61.5px;text-align:center;top:226.5px;color:#222">Ex.Pos</div>
<div style="position:absolute;left:705.3px;top:225.1px;width:61.5px;height:19px;background:#e5e5f5;"></div>
<div class="t" style="left:705.3px;width:61.5px;text-align:center;top:226.5px;color:#222">Delta</div>
<div style="position:absolute;left:767.8px;top:225.1px;width:55.2px;height:19px;background:#e5e5f5;"></div>
<div class="t" style="left:767.8px;width:55.2px;text-align:center;top:226.5px;color:#222">MIV</div>
<div style="position:absolute;left:8px;top:243.74px;width:73px;height:18.94px;background:linear-gradient(#14838c 0%,#0b4e8e 45%,#061f8c 75%,#031a88 100%);border-top:1px solid #6ab8d8;"></div>
<div class="t" style="left:15px;top:243.24px;font-size:13px;font-weight:bold;color:#fff;transform:scaleY(1.15)">2240 C</div>
<div style="position:absolute;left:86.0px;top:243.64px;width:367.5px;height:19.94px;background:#ffffff;border-top:1.4px solid #cfcfcf;"></div>
<div class="t tv" style="left:-164.0px;width:300px;text-align:right;top:245.14px;color:#1e1e1e">0,22</div>
<div class="t tv" style="left:171.8px;top:246.14px;color:#333;letter-spacing:0.3px">.....</div>
<div class="t tv" style="left:81.0px;width:300px;text-align:right;top:245.14px;color:#1e1e1e">-0,01</div>
<div class="t tv" style="left:142.0px;width:300px;text-align:right;top:245.14px;color:#1e1e1e">14,2%</div>
<div style="position:absolute;left:454.8px;top:243.64px;width:368.5px;height:19.94px;background:#e3fcfc;border-top:1.4px solid #c2d2d6;"></div>
<div class="t tv" style="left:204.8px;width:300px;text-align:right;top:245.14px;color:#1e1e1e">0,98</div>
<div class="t tv" style="left:540.6px;top:246.14px;color:#333;letter-spacing:0.3px">.....</div>
<div class="t tv" style="left:449.8px;width:300px;text-align:right;top:245.14px;color:#1e1e1e">2,09</div>
<div class="t tv" style="left:510.8px;width:300px;text-align:right;top:245.14px;color:#1e1e1e">10,3%</div>
<div style="position:absolute;left:8px;top:263.58px;width:73px;height:18.94px;background:linear-gradient(#14838c 0%,#0b4e8e 45%,#061f8c 75%,#031a88 100%);border-top:1px solid #6ab8d8;"></div>
<div class="t" style="left:15px;top:263.08px;font-size:13px;font-weight:bold;color:#fff;transform:scaleY(1.15)">2230 C</div>
<div style="position:absolute;left:86.0px;top:263.48px;width:367.5px;height:19.94px;background:#ffffff;border-top:1.4px solid #cfcfcf;"></div>
<div class="t tv" style="left:-164.0px;width:300px;text-align:right;top:264.98px;color:#1e1e1e">0,20</div>
<div class="t tv" style="left:171.8px;top:265.98px;color:#333;letter-spacing:0.3px">.....</div>
<div class="t tv" style="left:81.0px;width:300px;text-align:right;top:264.98px;color:#1e1e1e">0,01</div>
<div class="t tv" style="left:142.0px;width:300px;text-align:right;top:264.98px;color:#1e1e1e">13,3%</div>
<div style="position:absolute;left:454.8px;top:263.48px;width:368.5px;height:19.94px;background:#e3fcfc;border-top:1.4px solid #c2d2d6;"></div>
<div class="t tv" style="left:204.8px;width:300px;text-align:right;top:264.98px;color:#1e1e1e">1,23</div>
<div class="t tv" style="left:540.6px;top:265.98px;color:#333;letter-spacing:0.3px">.....</div>
<div class="t tv" style="left:449.8px;width:300px;text-align:right;top:264.98px;color:#1e1e1e">2,87</div>
<div class="t tv" style="left:510.8px;width:300px;text-align:right;top:264.98px;color:#1e1e1e">10,2%</div>
<div style="position:absolute;left:8px;top:283.42px;width:73px;height:18.94px;background:linear-gradient(#14838c 0%,#0b4e8e 45%,#061f8c 75%,#031a88 100%);border-top:1px solid #6ab8d8;"></div>
<div class="t" style="left:15px;top:282.92px;font-size:13px;font-weight:bold;color:#fff;transform:scaleY(1.15)">2220 C</div>
<div style="position:absolute;left:86.0px;top:283.32px;width:367.5px;height:19.94px;background:#ffffff;border-top:1.4px solid #cfcfcf;"></div>
<div class="t tv" style="left:-164.0px;width:300px;text-align:right;top:284.82px;color:#1e1e1e">0,32</div>
<div class="t tv" style="left:171.8px;top:285.82px;color:#333;letter-spacing:0.3px">.....</div>
<div class="t tv" style="left:81.0px;width:300px;text-align:right;top:284.82px;color:#1e1e1e">0,05</div>
<div class="t tv" style="left:142.0px;width:300px;text-align:right;top:284.82px;color:#1e1e1e">13,3%</div>
<div style="position:absolute;left:454.8px;top:283.32px;width:368.5px;height:19.94px;background:#e3fcfc;border-top:1.4px solid #c2d2d6;"></div>
<div class="t tv" style="left:204.8px;width:300px;text-align:right;top:284.82px;color:#1e1e1e">1,58</div>
<div class="t tv" style="left:540.6px;top:285.82px;color:#333;letter-spacing:0.3px">.....</div>
<div class="t tv" style="left:449.8px;width:300px;text-align:right;top:284.82px;color:#1e1e1e">3,88</div>
<div class="t tv" style="left:510.8px;width:300px;text-align:right;top:284.82px;color:#1e1e1e">10,1%</div>
<div style="position:absolute;left:8px;top:303.26px;width:73px;height:18.94px;background:linear-gradient(#14838c 0%,#0b4e8e 45%,#061f8c 75%,#031a88 100%);border-top:1px solid #6ab8d8;"></div>
<div class="t" style="left:15px;top:302.76px;font-size:13px;font-weight:bold;color:#fff;transform:scaleY(1.15)">2210 C</div>
<div style="position:absolute;left:86.0px;top:303.16px;width:367.5px;height:19.94px;background:#ffffff;border-top:1.4px solid #cfcfcf;"></div>
<div class="t tv" style="left:-164.0px;width:300px;text-align:right;top:304.66px;color:#1e1e1e">0,37</div>
<div class="t tv" style="left:171.8px;top:305.66px;color:#333;letter-spacing:0.3px">.....</div>
<div class="t tv" style="left:81.0px;width:300px;text-align:right;top:304.66px;color:#1e1e1e">0,13</div>
<div class="t tv" style="left:142.0px;width:300px;text-align:right;top:304.66px;color:#1e1e1e">12,7%</div>
<div style="position:absolute;left:454.8px;top:303.16px;width:368.5px;height:19.94px;background:#e3fcfc;border-top:1.4px solid #c2d2d6;"></div>
<div class="t tv" style="left:204.8px;width:300px;text-align:right;top:304.66px;color:#2a2ab4">2,00</div>
<div class="t tv" style="left:540.6px;top:305.66px;color:#333;letter-spacing:0.3px">.....</div>
<div class="t tv" style="left:449.8px;width:300px;text-align:right;top:304.66px;color:#1e1e1e">5,20</div>
<div class="t tv" style="left:510.8px;width:300px;text-align:right;top:304.66px;color:#1e1e1e">10,0%</div>
<div style="position:absolute;left:8px;top:323.10px;width:73px;height:18.94px;background:linear-gradient(#14838c 0%,#0b4e8e 45%,#061f8c 75%,#031a88 100%);border-top:1px solid #6ab8d8;"></div>
<div class="t" style="left:15px;top:322.60px;font-size:13px;font-weight:bold;color:#fff;transform:scaleY(1.15)">2200 C</div>
<div style="position:absolute;left:86.0px;top:323.00px;width:367.5px;height:19.94px;background:#e3fcfc;border-top:1.4px solid #c2d2d6;"></div>
<div class="t tv" style="left:-164.0px;width:300px;text-align:right;top:324.50px;color:#1e1e1e">0,42</div>
<div class="t tv" style="left:171.8px;top:325.50px;color:#333;letter-spacing:0.3px">.....</div>
<div class="t tv" style="left:81.0px;width:300px;text-align:right;top:324.50px;color:#1e1e1e">0,30</div>
<div class="t tv" style="left:142.0px;width:300px;text-align:right;top:324.50px;color:#1e1e1e">12,1%</div>
<div style="position:absolute;left:454.8px;top:323.00px;width:368.5px;height:19.94px;background:#e3fcfc;border-top:1.4px solid #c2d2d6;"></div>
<div class="t tv" style="left:204.8px;width:300px;text-align:right;top:324.50px;color:#2a2ab4">2,61</div>
<div class="t tv" style="left:540.6px;top:325.50px;color:#333;letter-spacing:0.3px">.....</div>
<div class="t tv" style="left:449.8px;width:300px;text-align:right;top:324.50px;color:#1e1e1e">6,86</div>
<div class="t tv" style="left:510.8px;width:300px;text-align:right;top:324.50px;color:#1e1e1e">10,0%</div>
<div style="position:absolute;left:8px;top:342.94px;width:73px;height:18.94px;background:linear-gradient(#14838c 0%,#0b4e8e 45%,#061f8c 75%,#031a88 100%);border-top:1px solid #6ab8d8;"></div>
<div class="t" style="left:15px;top:342.44px;font-size:13px;font-weight:bold;color:#fff;transform:scaleY(1.15)">2190 C</div>
<div style="position:absolute;left:86.0px;top:342.84px;width:367.5px;height:19.94px;background:#e3fcfc;border-top:1.4px solid #c2d2d6;"></div>
<div class="t tv" style="left:-164.0px;width:300px;text-align:right;top:344.34px;color:#1e1e1e">0,52</div>
<div class="t tv" style="left:171.8px;top:345.34px;color:#333;letter-spacing:0.3px">.....</div>
<div class="t tv" style="left:81.0px;width:300px;text-align:right;top:344.34px;color:#1e1e1e">0,64</div>
<div class="t tv" style="left:142.0px;width:300px;text-align:right;top:344.34px;color:#1e1e1e">11,7%</div>
<div style="position:absolute;left:454.8px;top:342.84px;width:368.5px;height:19.94px;background:#e3fcfc;border-top:1.4px solid #c2d2d6;"></div>
<div class="t tv" style="left:204.8px;width:300px;text-align:right;top:344.34px;color:#1e1e1e">3,40</div>
<div class="t tv" style="left:540.6px;top:345.34px;color:#333;letter-spacing:0.3px">.....</div>
<div class="t tv" style="left:449.8px;width:300px;text-align:right;top:344.34px;color:#1e1e1e">8,92</div>
<div class="t tv" style="left:510.8px;width:300px;text-align:right;top:344.34px;color:#1e1e1e">10,0%</div>
<div style="position:absolute;left:8px;top:362.78px;width:73px;height:18.94px;background:linear-gradient(#14838c 0%,#0b4e8e 45%,#061f8c 75%,#031a88 100%);border-top:1px solid #6ab8d8;"></div>
<div class="t" style="left:15px;top:362.28px;font-size:13px;font-weight:bold;color:#fff;transform:scaleY(1.15)">2180 C</div>
<div style="position:absolute;left:86.0px;top:362.68px;width:367.5px;height:19.94px;background:#e3fcfc;border-top:1.4px solid #c2d2d6;"></div>
<div class="t tv" style="left:-164.0px;width:300px;text-align:right;top:364.18px;color:#2a2ab4">0,62</div>
<div class="t tv" style="left:171.8px;top:365.18px;color:#333;letter-spacing:0.3px">.....</div>
<div class="t tv" style="left:81.0px;width:300px;text-align:right;top:364.18px;color:#1e1e1e">1,23</div>
<div class="t tv" style="left:142.0px;width:300px;text-align:right;top:364.18px;color:#1e1e1e">11,2%</div>
<div style="position:absolute;left:454.8px;top:362.68px;width:368.5px;height:19.94px;background:#feeefc;border-top:1.4px solid #d4c2d4;"></div>
<div class="t tv" style="left:204.8px;width:300px;text-align:right;top:364.18px;color:#2a2ab4">4,50</div>
<div class="t tv" style="left:540.6px;top:365.18px;color:#333;letter-spacing:0.3px">.....</div>
<div class="t tv" style="left:449.8px;width:300px;text-align:right;top:364.18px;color:#1e1e1e">11,4</div>
<div class="t tv" style="left:510.8px;width:300px;text-align:right;top:364.18px;color:#1e1e1e">10,1%</div>
<div style="position:absolute;left:8px;top:382.62px;width:73px;height:18.94px;background:linear-gradient(#14838c 0%,#0b4e8e 45%,#061f8c 75%,#031a88 100%);border-top:1px solid #6ab8d8;"></div>
<div class="t" style="left:15px;top:382.12px;font-size:13px;font-weight:bold;color:#fff;transform:scaleY(1.15)">2170 C</div>
<div style="position:absolute;left:86.0px;top:382.52px;width:367.5px;height:19.94px;background:#e3fcfc;border-top:1.4px solid #c2d2d6;"></div>
<div class="t tv" style="left:-164.0px;width:300px;text-align:right;top:384.02px;color:#2a2ab4">0,75</div>
<div class="t tv" style="left:171.8px;top:385.02px;color:#333;letter-spacing:0.3px">.....</div>
<div class="t tv" style="left:81.0px;width:300px;text-align:right;top:384.02px;color:#1e1e1e">2,23</div>
<div class="t tv" style="left:142.0px;width:300px;text-align:right;top:384.02px;color:#1e1e1e">10,6%</div>
<div style="position:absolute;left:454.8px;top:382.52px;width:368.5px;height:19.94px;background:#feeefc;border-top:1.4px solid #d4c2d4;"></div>
<div class="t tv" style="left:204.8px;width:300px;text-align:right;top:384.02px;color:#2a2ab4">5,90</div>
<div class="t tv" style="left:540.6px;top:385.02px;color:#333;letter-spacing:0.3px">.....</div>
<div class="t tv" style="left:449.8px;width:300px;text-align:right;top:384.02px;color:#1e1e1e">14,4</div>
<div class="t tv" style="left:510.8px;width:300px;text-align:right;top:384.02px;color:#1e1e1e">10,1%</div>
<div style="position:absolute;left:8px;top:402.46px;width:73px;height:18.94px;background:linear-gradient(#14838c 0%,#0b4e8e 45%,#061f8c 75%,#031a88 100%);border-top:1px solid #6ab8d8;"></div>
<div class="t" style="left:15px;top:401.96px;font-size:13px;font-weight:bold;color:#fff;transform:scaleY(1.15)">2160 C</div>
<div style="position:absolute;left:86.0px;top:402.36px;width:367.5px;height:19.94px;background:#e3fcfc;border-top:1.4px solid #c2d2d6;"></div>
<div class="t tv" style="left:-164.0px;width:300px;text-align:right;top:403.86px;color:#1e1e1e">0,98</div>
<div class="t tv" style="left:171.8px;top:404.86px;color:#333;letter-spacing:0.3px">.....</div>
<div class="t tv" style="left:81.0px;width:300px;text-align:right;top:403.86px;color:#1e1e1e">3,80</div>
<div class="t tv" style="left:142.0px;width:300px;text-align:right;top:403.86px;color:#1e1e1e">10,2%</div>
<div style="position:absolute;left:454.8px;top:402.36px;width:368.5px;height:19.94px;background:#feeefc;border-top:1.4px solid #d4c2d4;"></div>
<div class="t tv" style="left:204.8px;width:300px;text-align:right;top:403.86px;color:#2a2ab4">7,80</div>
<div class="t tv" style="left:540.6px;top:404.86px;color:#333;letter-spacing:0.3px">.....</div>
<div class="t tv" style="left:449.8px;width:300px;text-align:right;top:403.86px;color:#1e1e1e">17,9</div>
<div class="t tv" style="left:510.8px;width:300px;text-align:right;top:403.86px;color:#1e1e1e">10,3%</div>
<div style="position:absolute;left:8px;top:422.30px;width:73px;height:18.94px;background:linear-gradient(#14838c 0%,#0b4e8e 45%,#061f8c 75%,#031a88 100%);border-top:1px solid #6ab8d8;"></div>
<div class="t" style="left:15px;top:421.80px;font-size:13px;font-weight:bold;color:#fff;transform:scaleY(1.15)">2150 C</div>
<div style="position:absolute;left:86.0px;top:422.20px;width:367.5px;height:19.94px;background:#e3fcfc;border-top:1.4px solid #c2d2d6;"></div>
<div class="t tv" style="left:-164.0px;width:300px;text-align:right;top:423.70px;color:#1e1e1e">1,43</div>
<div class="t tv" style="left:171.8px;top:424.70px;color:#333;letter-spacing:0.3px">.....</div>
<div class="t tv" style="left:81.0px;width:300px;text-align:right;top:423.70px;color:#1e1e1e">6,22</div>
<div class="t tv" style="left:142.0px;width:300px;text-align:right;top:423.70px;color:#1e1e1e">10,0%</div>
<div style="position:absolute;left:454.8px;top:422.20px;width:368.5px;height:19.94px;background:#feeefc;border-top:1.4px solid #d4c2d4;"></div>
<div class="t tv" style="left:204.8px;width:300px;text-align:right;top:423.70px;color:#2a2ab4">10,15</div>
<div class="t tv" style="left:540.6px;top:424.70px;color:#333;letter-spacing:0.3px">.....</div>
<div class="t tv" style="left:449.8px;width:300px;text-align:right;top:423.70px;color:#1e1e1e">21,8</div>
<div class="t tv" style="left:510.8px;width:300px;text-align:right;top:423.70px;color:#1e1e1e">10,6%</div>
<div style="position:absolute;left:8px;top:442.14px;width:73px;height:18.94px;background:linear-gradient(#14838c 0%,#0b4e8e 45%,#061f8c 75%,#031a88 100%);border-top:1px solid #6ab8d8;"></div>
<div class="t" style="left:15px;top:441.64px;font-size:13px;font-weight:bold;color:#fff;transform:scaleY(1.15)">2140 C</div>
<div style="position:absolute;left:86.0px;top:442.04px;width:367.5px;height:19.94px;background:#feeefc;border-top:1.4px solid #d4c2d4;"></div>
<div class="t tv" style="left:-164.0px;width:300px;text-align:right;top:443.54px;color:#2a2ab4">2,24</div>
<div class="t tv" style="left:171.8px;top:444.54px;color:#333;letter-spacing:0.3px">.....</div>
<div class="t tv" style="left:81.0px;width:300px;text-align:right;top:443.54px;color:#1e1e1e">9,79</div>
<div class="t tv" style="left:142.0px;width:300px;text-align:right;top:443.54px;color:#1e1e1e">9,9%</div>
<div style="position:absolute;left:454.8px;top:442.04px;width:368.5px;height:19.94px;background:#feeefc;border-top:1.4px solid #d4c2d4;"></div>
<div class="t tv" style="left:204.8px;width:300px;text-align:right;top:443.54px;color:#2a2ab4">12,95</div>
<div class="t tv" style="left:540.6px;top:444.54px;color:#333;letter-spacing:0.3px">.....</div>
<div class="t tv" style="left:449.8px;width:300px;text-align:right;top:443.54px;color:#1e1e1e">26,2</div>
<div class="t tv" style="left:510.8px;width:300px;text-align:right;top:443.54px;color:#1e1e1e">10,8%</div>
<div style="position:absolute;left:8px;top:461.98px;width:73px;height:18.94px;background:linear-gradient(#14838c 0%,#0b4e8e 45%,#061f8c 75%,#031a88 100%);border-top:1px solid #6ab8d8;"></div>
<div class="t" style="left:15px;top:461.48px;font-size:13px;font-weight:bold;color:#fff;transform:scaleY(1.15)">2130 C</div>
<div style="position:absolute;left:86.0px;top:461.88px;width:367.5px;height:19.94px;background:#feeefc;border-top:1.4px solid #d4c2d4;"></div>
<div class="t tv" style="left:-164.0px;width:300px;text-align:right;top:463.38px;color:#2a2ab4">3,55</div>
<div class="t tv" style="left:-103.3px;width:300px;text-align:right;top:463.38px;color:#1e1e1e">3,45</div>
<div class="t tv" style="left:18.6px;width:300px;text-align:right;top:463.38px;color:#2a2ab4">-1</div>
<div class="t tv" style="left:81.0px;width:300px;text-align:right;top:463.38px;color:#1e1e1e">14,8</div>
<div class="t tv" style="left:142.0px;width:300px;text-align:right;top:463.38px;color:#1e1e1e">10,0%</div>
<div style="position:absolute;left:454.8px;top:461.88px;width:368.5px;height:19.94px;background:#feeefc;border-top:1.4px solid #d4c2d4;"></div>
<div class="t tv" style="left:204.8px;width:300px;text-align:right;top:463.38px;color:#2a2ab4">16,40</div>
<div class="t tv" style="left:540.6px;top:464.38px;color:#333;letter-spacing:0.3px">.....</div>
<div class="t tv" style="left:449.8px;width:300px;text-align:right;top:463.38px;color:#1e1e1e">30,9</div>
<div class="t tv" style="left:510.8px;width:300px;text-align:right;top:463.38px;color:#1e1e1e">11,1%</div>
<div style="position:absolute;left:8px;top:481.82px;width:73px;height:18.94px;background:linear-gradient(#14838c 0%,#0b4e8e 45%,#061f8c 75%,#031a88 100%);border-top:1px solid #6ab8d8;"></div>
<div class="t" style="left:15px;top:481.32px;font-size:13px;font-weight:bold;color:#fff;transform:scaleY(1.15)">2120 C</div>
<div style="position:absolute;left:86.0px;top:481.72px;width:367.5px;height:19.94px;background:#feeefc;border-top:1.4px solid #d4c2d4;"></div>
<div class="t tv" style="left:-164.0px;width:300px;text-align:right;top:483.22px;color:#2a2ab4">5,55</div>
<div class="t tv" style="left:171.8px;top:484.22px;color:#333;letter-spacing:0.3px">.....</div>
<div class="t tv" style="left:81.0px;width:300px;text-align:right;top:483.22px;color:#1e1e1e">21,3</div>
<div class="t tv" style="left:142.0px;width:300px;text-align:right;top:483.22px;color:#1e1e1e">10,2%</div>
<div style="position:absolute;left:454.8px;top:481.72px;width:368.5px;height:19.94px;background:#feeefc;border-top:1.4px solid #d4c2d4;"></div>
<div class="t tv" style="left:204.8px;width:300px;text-align:right;top:483.22px;color:#2a2ab4">20,35</div>
<div class="t tv" style="left:540.6px;top:484.22px;color:#333;letter-spacing:0.3px">.....</div>
<div class="t tv" style="left:449.8px;width:300px;text-align:right;top:483.22px;color:#1e1e1e">35,8</div>
<div class="t tv" style="left:510.8px;width:300px;text-align:right;top:483.22px;color:#1e1e1e">11,4%</div>
<div style="position:absolute;left:8px;top:501.66px;width:73px;height:18.94px;background:linear-gradient(#14838c 0%,#0b4e8e 45%,#061f8c 75%,#031a88 100%);border-top:1px solid #6ab8d8;"></div>
<div class="t" style="left:15px;top:501.16px;font-size:13px;font-weight:bold;color:#fff;transform:scaleY(1.15)">2110 C</div>
<div style="position:absolute;left:86.0px;top:501.56px;width:367.5px;height:19.94px;background:#feeefc;border-top:1.4px solid #d4c2d4;"></div>
<div class="t tv" style="left:-164.0px;width:300px;text-align:right;top:503.06px;color:#2a2ab4">8,50</div>
<div class="t tv" style="left:171.8px;top:504.06px;color:#333;letter-spacing:0.3px">.....</div>
<div class="t tv" style="left:81.0px;width:300px;text-align:right;top:503.06px;color:#1e1e1e">29,2</div>
<div class="t tv" style="left:142.0px;width:300px;text-align:right;top:503.06px;color:#1e1e1e">10,6%</div>
<div style="position:absolute;left:454.8px;top:501.56px;width:368.5px;height:19.94px;background:#feeefc;border-top:1.4px solid #d4c2d4;"></div>
<div class="t tv" style="left:204.8px;width:300px;text-align:right;top:503.06px;color:#2a2ab4">24,85</div>
<div class="t tv" style="left:540.6px;top:504.06px;color:#333;letter-spacing:0.3px">.....</div>
<div class="t tv" style="left:449.8px;width:300px;text-align:right;top:503.06px;color:#1e1e1e">40,9</div>
<div class="t tv" style="left:510.8px;width:300px;text-align:right;top:503.06px;color:#1e1e1e">11,7%</div>
<div style="position:absolute;left:8px;top:521.50px;width:73px;height:18.94px;background:linear-gradient(#14838c 0%,#0b4e8e 45%,#061f8c 75%,#031a88 100%);border-top:1px solid #6ab8d8;"></div>
<div class="t" style="left:15px;top:521.00px;font-size:13px;font-weight:bold;color:#fff;transform:scaleY(1.15)">2100 C</div>
<div style="position:absolute;left:86.0px;top:521.40px;width:367.5px;height:19.94px;background:#feeefc;border-top:1.4px solid #d4c2d4;"></div>
<div class="t tv" style="left:-164.0px;width:300px;text-align:right;top:522.90px;color:#2a2ab4">12,10</div>
<div class="t tv" style="left:171.8px;top:523.90px;color:#333;letter-spacing:0.3px">.....</div>
<div class="t tv" style="left:81.0px;width:300px;text-align:right;top:522.90px;color:#1e1e1e">38,2</div>
<div class="t tv" style="left:142.0px;width:300px;text-align:right;top:522.90px;color:#1e1e1e">10,9%</div>
<div style="position:absolute;left:454.8px;top:521.40px;width:368.5px;height:19.94px;background:#feeefc;border-top:1.4px solid #d4c2d4;"></div>
<div class="t tv" style="left:204.8px;width:300px;text-align:right;top:522.90px;color:#2a2ab4">30,00</div>
<div class="t tv" style="left:540.6px;top:523.90px;color:#333;letter-spacing:0.3px">.....</div>
<div class="t tv" style="left:449.8px;width:300px;text-align:right;top:522.90px;color:#1e1e1e">46,1</div>
<div class="t tv" style="left:510.8px;width:300px;text-align:right;top:522.90px;color:#1e1e1e">12,2%</div>
<div style="position:absolute;left:8px;top:541.34px;width:73px;height:18.94px;background:linear-gradient(#14838c 0%,#0b4e8e 45%,#061f8c 75%,#031a88 100%);border-top:1px solid #6ab8d8;"></div>
<div class="t" style="left:15px;top:540.84px;font-size:13px;font-weight:bold;color:#fff;transform:scaleY(1.15)">2090 C</div>
<div style="position:absolute;left:86.0px;top:541.24px;width:367.5px;height:19.94px;background:#feeefc;border-top:1.4px solid #d4c2d4;"></div>
<div class="t tv" style="left:-164.0px;width:300px;text-align:right;top:542.74px;color:#2a2ab4">17,25</div>
<div class="t tv" style="left:171.8px;top:543.74px;color:#333;letter-spacing:0.3px">.....</div>
<div class="t tv" style="left:81.0px;width:300px;text-align:right;top:542.74px;color:#1e1e1e">47,5</div>
<div class="t tv" style="left:142.0px;width:300px;text-align:right;top:542.74px;color:#1e1e1e">11,6%</div>
<div style="position:absolute;left:454.8px;top:541.24px;width:368.5px;height:19.94px;background:#feeefc;border-top:1.4px solid #d4c2d4;"></div>
<div class="t tv" style="left:204.8px;width:300px;text-align:right;top:542.74px;color:#2a2ab4">35,75</div>
<div class="t tv" style="left:540.6px;top:543.74px;color:#333;letter-spacing:0.3px">.....</div>
<div class="t tv" style="left:449.8px;width:300px;text-align:right;top:542.74px;color:#1e1e1e">51,1</div>
<div class="t tv" style="left:510.8px;width:300px;text-align:right;top:542.74px;color:#1e1e1e">12,6%</div>
<div style="position:absolute;left:8px;top:561.18px;width:73px;height:18.94px;background:linear-gradient(#14838c 0%,#0b4e8e 45%,#061f8c 75%,#031a88 100%);border-top:1px solid #6ab8d8;"></div>
<div class="t" style="left:15px;top:560.68px;font-size:13px;font-weight:bold;color:#fff;transform:scaleY(1.15)">2080 C &gt;</div>
<div style="position:absolute;left:86.0px;top:561.08px;width:367.5px;height:19.94px;background:#fcdffa;border-top:1.4px solid #d4c2d4;"></div>
<div class="t tv" style="left:-164.0px;width:300px;text-align:right;top:562.58px;color:#2a2ab4">22,80</div>
<div class="t tv" style="left:171.8px;top:563.58px;color:#333;letter-spacing:0.3px">.....</div>
<div class="t tv" style="left:81.0px;width:300px;text-align:right;top:562.58px;color:#1e1e1e">56,7</div>
<div class="t tv" style="left:142.0px;width:300px;text-align:right;top:562.58px;color:#1e1e1e">12,1%</div>
<div style="position:absolute;left:454.8px;top:561.08px;width:368.5px;height:19.94px;background:#fcdffa;border-top:1.4px solid #d4c2d4;"></div>
<div class="t tv" style="left:204.8px;width:300px;text-align:right;top:562.58px;color:#2a2ab4">41,65</div>
<div class="t tv" style="left:540.6px;top:563.58px;color:#333;letter-spacing:0.3px">.....</div>
<div class="t tv" style="left:449.8px;width:300px;text-align:right;top:562.58px;color:#1e1e1e">56,1</div>
<div class="t tv" style="left:510.8px;width:300px;text-align:right;top:562.58px;color:#1e1e1e">13,0%</div>
<div style="position:absolute;left:8px;top:581.02px;width:73px;height:18.94px;background:linear-gradient(#14838c 0%,#0b4e8e 45%,#061f8c 75%,#031a88 100%);border-top:1px solid #6ab8d8;"></div>
<div class="t" style="left:15px;top:580.52px;font-size:13px;font-weight:bold;color:#fff;transform:scaleY(1.15)">2070 C</div>
<div style="position:absolute;left:86.0px;top:580.92px;width:367.5px;height:19.94px;background:#feeefc;border-top:1.4px solid #d4c2d4;"></div>
<div class="t tv" style="left:-164.0px;width:300px;text-align:right;top:582.42px;color:#2a2ab4">29,40</div>
<div class="t tv" style="left:171.8px;top:583.42px;color:#333;letter-spacing:0.3px">.....</div>
<div class="t tv" style="left:81.0px;width:300px;text-align:right;top:582.42px;color:#1e1e1e">65,2</div>
<div class="t tv" style="left:142.0px;width:300px;text-align:right;top:582.42px;color:#1e1e1e">12,7%</div>
<div style="position:absolute;left:454.8px;top:580.92px;width:368.5px;height:19.94px;background:#feeefc;border-top:1.4px solid #d4c2d4;"></div>
<div class="t tv" style="left:204.8px;width:300px;text-align:right;top:582.42px;color:#2a2ab4">48,25</div>
<div class="t tv" style="left:540.6px;top:583.42px;color:#333;letter-spacing:0.3px">.....</div>
<div class="t tv" style="left:449.8px;width:300px;text-align:right;top:582.42px;color:#1e1e1e">60,7</div>
<div class="t tv" style="left:510.8px;width:300px;text-align:right;top:582.42px;color:#1e1e1e">13,5%</div>
<div style="position:absolute;left:7px;top:601.3px;width:820px;height:4px;background:#f0f0f0;border-top:1px solid #c8c8c8;border-bottom:1px solid #b8b8b8"></div>
<div style="position:absolute;left:8px;top:605.30px;width:73px;height:18.94px;background:linear-gradient(#14838c 0%,#0b4e8e 45%,#061f8c 75%,#031a88 100%);border-top:1px solid #6ab8d8;"></div>
<div class="t" style="left:15px;top:604.80px;font-size:13px;font-weight:bold;color:#fff;transform:scaleY(1.15)">2000 P</div>
<div style="position:absolute;left:86.0px;top:605.70px;width:367.5px;height:19.94px;background:#e3fcfc;border-top:1.4px solid #c2d2d6;"></div>
<div class="t tv" style="left:-164.0px;width:300px;text-align:right;top:606.80px;color:#1e1e1e">6,20</div>
<div class="t tv" style="left:171.8px;top:607.80px;color:#333;letter-spacing:0.3px">.....</div>
<div class="t tv" style="left:81.0px;width:300px;text-align:right;top:606.80px;color:#1e1e1e">-10,2</div>
<div class="t tv" style="left:142.0px;width:300px;text-align:right;top:606.80px;color:#1e1e1e">17,4%</div>
<div style="position:absolute;left:454.8px;top:605.70px;width:368.5px;height:19.94px;background:#feeefc;border-top:1.4px solid #d4c2d4;"></div>
<div class="t tv" style="left:204.8px;width:300px;text-align:right;top:606.80px;color:#2a2ab4">20,20</div>
<div class="t tv" style="left:540.6px;top:607.80px;color:#333;letter-spacing:0.3px">.....</div>
<div class="t tv" style="left:449.8px;width:300px;text-align:right;top:606.80px;color:#1e1e1e">-20,0</div>
<div class="t tv" style="left:510.8px;width:300px;text-align:right;top:606.80px;color:#1e1e1e">16,4%</div>
<div style="position:absolute;left:8px;top:625.14px;width:73px;height:18.94px;background:linear-gradient(#14838c 0%,#0b4e8e 45%,#061f8c 75%,#031a88 100%);border-top:1px solid #6ab8d8;"></div>
<div class="t" style="left:15px;top:624.64px;font-size:13px;font-weight:bold;color:#fff;transform:scaleY(1.15)">1990 P</div>
<div style="position:absolute;left:86.0px;top:625.54px;width:367.5px;height:19.94px;background:#e3fcfc;border-top:1.4px solid #c2d2d6;"></div>
<div class="t tv" style="left:-164.0px;width:300px;text-align:right;top:626.64px;color:#1e1e1e">5,20</div>
<div class="t tv" style="left:171.8px;top:627.64px;color:#333;letter-spacing:0.3px">.....</div>
<div class="t tv" style="left:81.0px;width:300px;text-align:right;top:626.64px;color:#1e1e1e">-8,66</div>
<div class="t tv" style="left:142.0px;width:300px;text-align:right;top:626.64px;color:#1e1e1e">17,9%</div>
<div style="position:absolute;left:454.8px;top:625.54px;width:368.5px;height:19.94px;background:#feeefc;border-top:1.4px solid #d4c2d4;"></div>
<div class="t tv" style="left:204.8px;width:300px;text-align:right;top:626.64px;color:#2a2ab4">18,60</div>
<div class="t tv" style="left:540.6px;top:627.64px;color:#333;letter-spacing:0.3px">.....</div>
<div class="t tv" style="left:449.8px;width:300px;text-align:right;top:626.64px;color:#1e1e1e">-18,3</div>
<div class="t tv" style="left:510.8px;width:300px;text-align:right;top:626.64px;color:#1e1e1e">16,8%</div>
<div style="position:absolute;left:8px;top:644.98px;width:73px;height:18.94px;background:linear-gradient(#14838c 0%,#0b4e8e 45%,#061f8c 75%,#031a88 100%);border-top:1px solid #6ab8d8;"></div>
<div class="t" style="left:15px;top:644.48px;font-size:13px;font-weight:bold;color:#fff;transform:scaleY(1.15)">1980 P</div>
<div style="position:absolute;left:86.0px;top:645.38px;width:367.5px;height:19.94px;background:#e3fcfc;border-top:1.4px solid #c2d2d6;"></div>
<div class="t tv" style="left:-164.0px;width:300px;text-align:right;top:646.48px;color:#2a2ab4">4,55</div>
<div class="t tv" style="left:171.8px;top:647.48px;color:#333;letter-spacing:0.3px">.....</div>
<div class="t tv" style="left:81.0px;width:300px;text-align:right;top:646.48px;color:#1e1e1e">-7,36</div>
<div class="t tv" style="left:142.0px;width:300px;text-align:right;top:646.48px;color:#1e1e1e">18,5%</div>
<div style="position:absolute;left:454.8px;top:645.38px;width:368.5px;height:19.94px;background:#e3fcfc;border-top:1.4px solid #c2d2d6;"></div>
<div class="t tv" style="left:204.8px;width:300px;text-align:right;top:646.48px;color:#2a2ab4">17,20</div>
<div class="t tv" style="left:540.6px;top:647.48px;color:#333;letter-spacing:0.3px">.....</div>
<div class="t tv" style="left:449.8px;width:300px;text-align:right;top:646.48px;color:#1e1e1e">-16,8</div>
<div class="t tv" style="left:510.8px;width:300px;text-align:right;top:646.48px;color:#1e1e1e">17,2%</div>
<div style="position:absolute;left:8px;top:664.82px;width:73px;height:18.94px;background:linear-gradient(#14838c 0%,#0b4e8e 45%,#061f8c 75%,#031a88 100%);border-top:1px solid #6ab8d8;"></div>
<div class="t" style="left:15px;top:664.32px;font-size:13px;font-weight:bold;color:#fff;transform:scaleY(1.15)">1970 P</div>
<div style="position:absolute;left:86.0px;top:665.22px;width:367.5px;height:19.94px;background:#e3fcfc;border-top:1.4px solid #c2d2d6;"></div>
<div class="t tv" style="left:-164.0px;width:300px;text-align:right;top:666.32px;color:#2a2ab4">4,05</div>
<div class="t tv" style="left:171.8px;top:667.32px;color:#333;letter-spacing:0.3px">.....</div>
<div class="t tv" style="left:81.0px;width:300px;text-align:right;top:666.32px;color:#1e1e1e">-6,29</div>
<div class="t tv" style="left:142.0px;width:300px;text-align:right;top:666.32px;color:#1e1e1e">19,2%</div>
<div style="position:absolute;left:454.8px;top:665.22px;width:368.5px;height:19.94px;background:#e3fcfc;border-top:1.4px solid #c2d2d6;"></div>
<div class="t tv" style="left:204.8px;width:300px;text-align:right;top:666.32px;color:#2a2ab4">15,95</div>
<div class="t tv" style="left:540.6px;top:667.32px;color:#333;letter-spacing:0.3px">.....</div>
<div class="t tv" style="left:449.8px;width:300px;text-align:right;top:666.32px;color:#1e1e1e">-15,4</div>
<div class="t tv" style="left:510.8px;width:300px;text-align:right;top:666.32px;color:#1e1e1e">17,7%</div>
<div style="position:absolute;left:8px;top:684.66px;width:73px;height:18.94px;background:linear-gradient(#14838c 0%,#0b4e8e 45%,#061f8c 75%,#031a88 100%);border-top:1px solid #6ab8d8;"></div>
<div class="t" style="left:15px;top:684.16px;font-size:13px;font-weight:bold;color:#fff;transform:scaleY(1.15)">1960 P</div>
<div style="position:absolute;left:86.0px;top:685.06px;width:367.5px;height:19.94px;background:#ffffff;border-top:1.4px solid #cfcfcf;"></div>
<div class="t tv" style="left:-164.0px;width:300px;text-align:right;top:686.16px;color:#2a2ab4">3,60</div>
<div class="t tv" style="left:171.8px;top:687.16px;color:#333;letter-spacing:0.3px">.....</div>
<div class="t tv" style="left:81.0px;width:300px;text-align:right;top:686.16px;color:#2a2ab4">-5,40</div>
<div class="t tv" style="left:142.0px;width:300px;text-align:right;top:686.16px;color:#2a2ab4">19,9%</div>
<div style="position:absolute;left:454.8px;top:685.06px;width:368.5px;height:19.94px;background:#e3fcfc;border-top:1.4px solid #c2d2d6;"></div>
<div class="t tv" style="left:204.8px;width:300px;text-align:right;top:686.16px;color:#2a2ab4">14,70</div>
<div class="t tv" style="left:540.6px;top:687.16px;color:#333;letter-spacing:0.3px">.....</div>
<div class="t tv" style="left:449.8px;width:300px;text-align:right;top:686.16px;color:#1e1e1e">-14,2</div>
<div class="t tv" style="left:510.8px;width:300px;text-align:right;top:686.16px;color:#1e1e1e">18,1%</div>
<div style="position:absolute;left:8px;top:704.50px;width:73px;height:18.94px;background:linear-gradient(#14838c 0%,#0b4e8e 45%,#061f8c 75%,#031a88 100%);border-top:1px solid #6ab8d8;"></div>
<div class="t" style="left:15px;top:704.00px;font-size:13px;font-weight:bold;color:#fff;transform:scaleY(1.15)">1950 P</div>
<div style="position:absolute;left:86.0px;top:704.90px;width:367.5px;height:19.94px;background:#ffffff;border-top:1.4px solid #cfcfcf;"></div>
<div class="t tv" style="left:-164.0px;width:300px;text-align:right;top:706.00px;color:#2a2ab4">3,20</div>
<div class="t tv" style="left:171.8px;top:707.00px;color:#333;letter-spacing:0.3px">.....</div>
<div class="t tv" style="left:81.0px;width:300px;text-align:right;top:706.00px;color:#2a2ab4">-4,67</div>
<div class="t tv" style="left:142.0px;width:300px;text-align:right;top:706.00px;color:#2a2ab4">20,5%</div>
<div style="position:absolute;left:454.8px;top:704.90px;width:368.5px;height:19.94px;background:#e3fcfc;border-top:1.4px solid #c2d2d6;"></div>
<div class="t tv" style="left:204.8px;width:300px;text-align:right;top:706.00px;color:#2a2ab4">13,70</div>
<div class="t tv" style="left:540.6px;top:707.00px;color:#333;letter-spacing:0.3px">.....</div>
<div class="t tv" style="left:449.8px;width:300px;text-align:right;top:706.00px;color:#1e1e1e">-13,0</div>
<div class="t tv" style="left:510.8px;width:300px;text-align:right;top:706.00px;color:#1e1e1e">18,6%</div>
<div style="position:absolute;left:8px;top:724.34px;width:73px;height:18.94px;background:linear-gradient(#14838c 0%,#0b4e8e 45%,#061f8c 75%,#031a88 100%);border-top:1px solid #6ab8d8;"></div>
<div class="t" style="left:15px;top:723.84px;font-size:13px;font-weight:bold;color:#fff;transform:scaleY(1.15)">1940 P</div>
<div style="position:absolute;left:86.0px;top:724.74px;width:367.5px;height:19.94px;background:#ffffff;border-top:1.4px solid #cfcfcf;"></div>
<div class="t tv" style="left:-164.0px;width:300px;text-align:right;top:725.84px;color:#2a2ab4">2,90</div>
<div class="t tv" style="left:171.8px;top:726.84px;color:#333;letter-spacing:0.3px">.....</div>
<div class="t tv" style="left:81.0px;width:300px;text-align:right;top:725.84px;color:#2a2ab4">-4,06</div>
<div class="t tv" style="left:142.0px;width:300px;text-align:right;top:725.84px;color:#2a2ab4">21,3%</div>
<div style="position:absolute;left:454.8px;top:724.74px;width:368.5px;height:19.94px;background:#e3fcfc;border-top:1.4px solid #c2d2d6;"></div>
<div class="t tv" style="left:204.8px;width:300px;text-align:right;top:725.84px;color:#2a2ab4">12,70</div>
<div class="t tv" style="left:540.6px;top:726.84px;color:#333;letter-spacing:0.3px">.....</div>
<div class="t tv" style="left:449.8px;width:300px;text-align:right;top:725.84px;color:#1e1e1e">-12,0</div>
<div class="t tv" style="left:510.8px;width:300px;text-align:right;top:725.84px;color:#1e1e1e">19,0%</div>
<div style="position:absolute;left:8px;top:744.18px;width:73px;height:18.94px;background:linear-gradient(#14838c 0%,#0b4e8e 45%,#061f8c 75%,#031a88 100%);border-top:1px solid #6ab8d8;"></div>
<div class="t" style="left:15px;top:743.68px;font-size:13px;font-weight:bold;color:#fff;transform:scaleY(1.15)">1930 P</div>
<div style="position:absolute;left:86.0px;top:744.58px;width:367.5px;height:19.94px;background:#ffffff;border-top:1.4px solid #cfcfcf;"></div>
<div class="t tv" style="left:-164.0px;width:300px;text-align:right;top:745.68px;color:#1e1e1e">2,62</div>
<div class="t tv" style="left:171.8px;top:746.68px;color:#333;letter-spacing:0.3px">.....</div>
<div class="t tv" style="left:81.0px;width:300px;text-align:right;top:745.68px;color:#1e1e1e">-3,55</div>
<div class="t tv" style="left:142.0px;width:300px;text-align:right;top:745.68px;color:#1e1e1e">22,0%</div>
<div style="position:absolute;left:454.8px;top:744.58px;width:368.5px;height:19.94px;background:#e3fcfc;border-top:1.4px solid #c2d2d6;"></div>
<div class="t tv" style="left:204.8px;width:300px;text-align:right;top:745.68px;color:#2a2ab4">11,75</div>
<div class="t tv" style="left:540.6px;top:746.68px;color:#333;letter-spacing:0.3px">.....</div>
<div class="t tv" style="left:449.8px;width:300px;text-align:right;top:745.68px;color:#1e1e1e">-11,1</div>
<div class="t tv" style="left:510.8px;width:300px;text-align:right;top:745.68px;color:#1e1e1e">19,3%</div>
<div style="position:absolute;left:8px;top:764.02px;width:73px;height:18.94px;background:linear-gradient(#14838c 0%,#0b4e8e 45%,#061f8c 75%,#031a88 100%);border-top:1px solid #6ab8d8;"></div>
<div class="t" style="left:15px;top:763.52px;font-size:13px;font-weight:bold;color:#fff;transform:scaleY(1.15)">1920 P</div>
<div style="position:absolute;left:86.0px;top:764.42px;width:367.5px;height:19.94px;background:#ffffff;border-top:1.4px solid #cfcfcf;"></div>
<div class="t tv" style="left:-164.0px;width:300px;text-align:right;top:765.52px;color:#2a2ab4">2,35</div>
<div class="t tv" style="left:171.8px;top:766.52px;color:#333;letter-spacing:0.3px">.....</div>
<div class="t tv" style="left:81.0px;width:300px;text-align:right;top:765.52px;color:#2a2ab4">-3,11</div>
<div class="t tv" style="left:142.0px;width:300px;text-align:right;top:765.52px;color:#2a2ab4">22,7%</div>
<div style="position:absolute;left:454.8px;top:764.42px;width:368.5px;height:19.94px;background:#e3fcfc;border-top:1.4px solid #c2d2d6;"></div>
<div class="t tv" style="left:204.8px;width:300px;text-align:right;top:765.52px;color:#2a2ab4">11,00</div>
<div class="t tv" style="left:540.6px;top:766.52px;color:#333;letter-spacing:0.3px">.....</div>
<div class="t tv" style="left:449.8px;width:300px;text-align:right;top:765.52px;color:#1e1e1e">-10,2</div>
<div class="t tv" style="left:510.8px;width:300px;text-align:right;top:765.52px;color:#1e1e1e">19,8%</div>
<div style="position:absolute;left:8px;top:783.86px;width:73px;height:18.94px;background:linear-gradient(#14838c 0%,#0b4e8e 45%,#061f8c 75%,#031a88 100%);border-top:1px solid #6ab8d8;"></div>
<div class="t" style="left:15px;top:783.36px;font-size:13px;font-weight:bold;color:#fff;transform:scaleY(1.15)">1910 P</div>
<div style="position:absolute;left:86.0px;top:784.26px;width:367.5px;height:19.94px;background:#ffffff;border-top:1.4px solid #cfcfcf;"></div>
<div class="t tv" style="left:-164.0px;width:300px;text-align:right;top:785.36px;color:#1e1e1e">2,15</div>
<div class="t tv" style="left:171.8px;top:786.36px;color:#333;letter-spacing:0.3px">.....</div>
<div class="t tv" style="left:81.0px;width:300px;text-align:right;top:785.36px;color:#1e1e1e">-2,74</div>
<div class="t tv" style="left:142.0px;width:300px;text-align:right;top:785.36px;color:#1e1e1e">23,4%</div>
<div style="position:absolute;left:454.8px;top:784.26px;width:368.5px;height:19.94px;background:#e3fcfc;border-top:1.4px solid #c2d2d6;"></div>
<div class="t tv" style="left:204.8px;width:300px;text-align:right;top:785.36px;color:#2a2ab4">10,00</div>
<div class="t tv" style="left:540.6px;top:786.36px;color:#333;letter-spacing:0.3px">.....</div>
<div class="t tv" style="left:449.8px;width:300px;text-align:right;top:785.36px;color:#1e1e1e">-9,45</div>
<div class="t tv" style="left:510.8px;width:300px;text-align:right;top:785.36px;color:#1e1e1e">20,1%</div>
<div style="position:absolute;left:8px;top:803.70px;width:73px;height:18.94px;background:linear-gradient(#14838c 0%,#0b4e8e 45%,#061f8c 75%,#031a88 100%);border-top:1px solid #6ab8d8;"></div>
<div class="t" style="left:15px;top:803.20px;font-size:13px;font-weight:bold;color:#fff;transform:scaleY(1.15)">1900 P</div>
<div style="position:absolute;left:86.0px;top:804.10px;width:367.5px;height:19.94px;background:#ffffff;border-top:1.4px solid #cfcfcf;"></div>
<div class="t tv" style="left:-164.0px;width:300px;text-align:right;top:805.20px;color:#2a2ab4">1,95</div>
<div class="t tv" style="left:171.8px;top:806.20px;color:#333;letter-spacing:0.3px">.....</div>
<div class="t tv" style="left:81.0px;width:300px;text-align:right;top:805.20px;color:#2a2ab4">-2,42</div>
<div class="t tv" style="left:142.0px;width:300px;text-align:right;top:805.20px;color:#2a2ab4">24,1%</div>
<div style="position:absolute;left:454.8px;top:804.10px;width:368.5px;height:19.94px;background:#e3fcfc;border-top:1.4px solid #c2d2d6;"></div>
<div class="t tv" style="left:204.8px;width:300px;text-align:right;top:805.20px;color:#2a2ab4">9,35</div>
<div class="t tv" style="left:540.6px;top:806.20px;color:#333;letter-spacing:0.3px">.....</div>
<div class="t tv" style="left:449.8px;width:300px;text-align:right;top:805.20px;color:#1e1e1e">-8,73</div>
<div class="t tv" style="left:510.8px;width:300px;text-align:right;top:805.20px;color:#1e1e1e">20,5%</div>
<div style="position:absolute;left:8px;top:823.54px;width:73px;height:18.94px;background:linear-gradient(#14838c 0%,#0b4e8e 45%,#061f8c 75%,#031a88 100%);border-top:1px solid #6ab8d8;"></div>
<div class="t" style="left:15px;top:823.04px;font-size:13px;font-weight:bold;color:#fff;transform:scaleY(1.15)">1890 P</div>
<div style="position:absolute;left:86.0px;top:823.94px;width:367.5px;height:19.94px;background:#ffffff;border-top:1.4px solid #cfcfcf;"></div>
<div class="t tv" style="left:-164.0px;width:300px;text-align:right;top:825.04px;color:#1e1e1e">1,80</div>
<div class="t tv" style="left:171.8px;top:826.04px;color:#333;letter-spacing:0.3px">.....</div>
<div class="t tv" style="left:81.0px;width:300px;text-align:right;top:825.04px;color:#1e1e1e">-2,15</div>
<div class="t tv" style="left:142.0px;width:300px;text-align:right;top:825.04px;color:#1e1e1e">24,9%</div>
<div style="position:absolute;left:454.8px;top:823.94px;width:368.5px;height:19.94px;background:#e3fcfc;border-top:1.4px solid #c2d2d6;"></div>
<div class="t tv" style="left:204.8px;width:300px;text-align:right;top:825.04px;color:#2a2ab4">8,75</div>
<div class="t tv" style="left:540.6px;top:826.04px;color:#333;letter-spacing:0.3px">.....</div>
<div class="t tv" style="left:449.8px;width:300px;text-align:right;top:825.04px;color:#1e1e1e">-8,07</div>
<div class="t tv" style="left:510.8px;width:300px;text-align:right;top:825.04px;color:#1e1e1e">20,9%</div>
<div style="position:absolute;left:8px;top:843.38px;width:73px;height:18.94px;background:linear-gradient(#14838c 0%,#0b4e8e 45%,#061f8c 75%,#031a88 100%);border-top:1px solid #6ab8d8;"></div>
<div class="t" style="left:15px;top:842.88px;font-size:13px;font-weight:bold;color:#fff;transform:scaleY(1.15)">1880 P</div>
<div style="position:absolute;left:86.0px;top:843.78px;width:367.5px;height:19.94px;background:#ffffff;border-top:1.4px solid #cfcfcf;"></div>
<div class="t tv" style="left:-164.0px;width:300px;text-align:right;top:844.88px;color:#2a2ab4">1,65</div>
<div class="t tv" style="left:171.8px;top:845.88px;color:#333;letter-spacing:0.3px">.....</div>
<div class="t tv" style="left:81.0px;width:300px;text-align:right;top:844.88px;color:#2a2ab4">-1,92</div>
<div class="t tv" style="left:142.0px;width:300px;text-align:right;top:844.88px;color:#2a2ab4">25,5%</div>
<div style="position:absolute;left:454.8px;top:843.78px;width:368.5px;height:19.94px;background:#ffffff;border-top:1.4px solid #cfcfcf;"></div>
<div class="t tv" style="left:204.8px;width:300px;text-align:right;top:844.88px;color:#2a2ab4">8,10</div>
<div class="t tv" style="left:540.6px;top:845.88px;color:#333;letter-spacing:0.3px">.....</div>
<div class="t tv" style="left:449.8px;width:300px;text-align:right;top:844.88px;color:#2a2ab4">-7,45</div>
<div class="t tv" style="left:510.8px;width:300px;text-align:right;top:844.88px;color:#2a2ab4">21,3%</div>
<div style="position:absolute;left:8px;top:863.22px;width:73px;height:18.94px;background:linear-gradient(#14838c 0%,#0b4e8e 45%,#061f8c 75%,#031a88 100%);border-top:1px solid #6ab8d8;"></div>
<div class="t" style="left:15px;top:862.72px;font-size:13px;font-weight:bold;color:#fff;transform:scaleY(1.15)">1870 P</div>
<div style="position:absolute;left:86.0px;top:863.62px;width:367.5px;height:19.94px;background:#ffffff;border-top:1.4px solid #cfcfcf;"></div>
<div class="t tv" style="left:-164.0px;width:300px;text-align:right;top:864.72px;color:#1e1e1e">1,52</div>
<div class="t tv" style="left:171.8px;top:865.72px;color:#333;letter-spacing:0.3px">.....</div>
<div class="t tv" style="left:81.0px;width:300px;text-align:right;top:864.72px;color:#1e1e1e">-1,72</div>
<div class="t tv" style="left:142.0px;width:300px;text-align:right;top:864.72px;color:#1e1e1e">26,4%</div>
<div style="position:absolute;left:454.8px;top:863.62px;width:368.5px;height:19.94px;background:#ffffff;border-top:1.4px solid #cfcfcf;"></div>
<div class="t tv" style="left:204.8px;width:300px;text-align:right;top:864.72px;color:#2a2ab4">7,50</div>
<div class="t tv" style="left:540.6px;top:865.72px;color:#333;letter-spacing:0.3px">.....</div>
<div class="t tv" style="left:449.8px;width:300px;text-align:right;top:864.72px;color:#2a2ab4">-6,87</div>
<div class="t tv" style="left:510.8px;width:300px;text-align:right;top:864.72px;color:#2a2ab4">21,7%</div>
<div style="position:absolute;left:8px;top:883.06px;width:73px;height:18.94px;background:linear-gradient(#14838c 0%,#0b4e8e 45%,#061f8c 75%,#031a88 100%);border-top:1px solid #6ab8d8;"></div>
<div class="t" style="left:15px;top:882.56px;font-size:13px;font-weight:bold;color:#fff;transform:scaleY(1.15)">1860 P</div>
<div style="position:absolute;left:86.0px;top:883.46px;width:367.5px;height:19.94px;background:#ffffff;border-top:1.4px solid #cfcfcf;"></div>
<div class="t tv" style="left:-164.0px;width:300px;text-align:right;top:884.56px;color:#1e1e1e">1,40</div>
<div class="t tv" style="left:171.8px;top:885.56px;color:#333;letter-spacing:0.3px">.....</div>
<div class="t tv" style="left:81.0px;width:300px;text-align:right;top:884.56px;color:#1e1e1e">-1,54</div>
<div class="t tv" style="left:142.0px;width:300px;text-align:right;top:884.56px;color:#1e1e1e">27,0%</div>
<div style="position:absolute;left:454.8px;top:883.46px;width:368.5px;height:19.94px;background:#ffffff;border-top:1.4px solid #cfcfcf;"></div>
<div class="t tv" style="left:204.8px;width:300px;text-align:right;top:884.56px;color:#2a2ab4">7,00</div>
<div class="t tv" style="left:540.6px;top:885.56px;color:#333;letter-spacing:0.3px">.....</div>
<div class="t tv" style="left:449.8px;width:300px;text-align:right;top:884.56px;color:#2a2ab4">-6,34</div>
<div class="t tv" style="left:510.8px;width:300px;text-align:right;top:884.56px;color:#2a2ab4">22,1%</div>
<div style="position:absolute;left:8px;top:902.90px;width:73px;height:18.94px;background:linear-gradient(#14838c 0%,#0b4e8e 45%,#061f8c 75%,#031a88 100%);border-top:1px solid #6ab8d8;"></div>
<div class="t" style="left:15px;top:902.40px;font-size:13px;font-weight:bold;color:#fff;transform:scaleY(1.15)">1850 P</div>
<div style="position:absolute;left:86.0px;top:903.30px;width:367.5px;height:19.94px;background:#ffffff;border-top:1.4px solid #cfcfcf;"></div>
<div class="t tv" style="left:-164.0px;width:300px;text-align:right;top:904.40px;color:#1e1e1e">1,23</div>
<div class="t tv" style="left:171.8px;top:905.40px;color:#333;letter-spacing:0.3px">.....</div>
<div class="t tv" style="left:81.0px;width:300px;text-align:right;top:904.40px;color:#1e1e1e">-1,39</div>
<div class="t tv" style="left:142.0px;width:300px;text-align:right;top:904.40px;color:#1e1e1e">27,5%</div>
<div style="position:absolute;left:454.8px;top:903.30px;width:368.5px;height:19.94px;background:#ffffff;border-top:1.4px solid #cfcfcf;"></div>
<div class="t tv" style="left:204.8px;width:300px;text-align:right;top:904.40px;color:#1e1e1e">6,60</div>
<div class="t tv" style="left:540.6px;top:905.40px;color:#333;letter-spacing:0.3px">.....</div>
<div class="t tv" style="left:449.8px;width:300px;text-align:right;top:904.40px;color:#1e1e1e">-5,86</div>
<div class="t tv" style="left:510.8px;width:300px;text-align:right;top:904.40px;color:#1e1e1e">22,5%</div>
<div style="position:absolute;left:8px;top:922.74px;width:73px;height:18.94px;background:linear-gradient(#14838c 0%,#0b4e8e 45%,#061f8c 75%,#031a88 100%);border-top:1px solid #6ab8d8;"></div>
<div class="t" style="left:15px;top:922.24px;font-size:13px;font-weight:bold;color:#fff;transform:scaleY(1.15)">1840 P</div>
<div style="position:absolute;left:86.0px;top:923.14px;width:367.5px;height:19.94px;background:#ffffff;border-top:1.4px solid #cfcfcf;"></div>
<div class="t tv" style="left:-164.0px;width:300px;text-align:right;top:924.24px;color:#2a2ab4">1,20</div>
<div class="t tv" style="left:-103.3px;width:300px;text-align:right;top:924.24px;color:#2a2ab4">9,50</div>
<div class="t tv" style="left:18.6px;width:300px;text-align:right;top:924.24px;color:#2a2ab4">-2</div>
<div class="t tv" style="left:81.0px;width:300px;text-align:right;top:924.24px;color:#2a2ab4">-1,25</div>
<div class="t tv" style="left:142.0px;width:300px;text-align:right;top:924.24px;color:#2a2ab4">28,4%</div>
<div style="position:absolute;left:454.8px;top:923.14px;width:368.5px;height:19.94px;background:#ffffff;border-top:1.4px solid #cfcfcf;"></div>
<div class="t tv" style="left:204.8px;width:300px;text-align:right;top:924.24px;color:#2a2ab4">6,10</div>
<div class="t tv" style="left:540.6px;top:925.24px;color:#333;letter-spacing:0.3px">.....</div>
<div class="t tv" style="left:449.8px;width:300px;text-align:right;top:924.24px;color:#2a2ab4">-5,42</div>
<div class="t tv" style="left:510.8px;width:300px;text-align:right;top:924.24px;color:#2a2ab4">23,0%</div>
<div style="position:absolute;left:8px;top:942.58px;width:73px;height:18.94px;background:linear-gradient(#14838c 0%,#0b4e8e 45%,#061f8c 75%,#031a88 100%);border-top:1px solid #6ab8d8;"></div>
<div class="t" style="left:15px;top:942.08px;font-size:13px;font-weight:bold;color:#fff;transform:scaleY(1.15)">1830 P</div>
<div style="position:absolute;left:86.0px;top:942.98px;width:367.5px;height:19.94px;background:#ffffff;border-top:1.4px solid #cfcfcf;"></div>
<div class="t tv" style="left:-164.0px;width:300px;text-align:right;top:944.08px;color:#1e1e1e">1,13</div>
<div class="t tv" style="left:171.8px;top:945.08px;color:#333;letter-spacing:0.3px">.....</div>
<div class="t tv" style="left:81.0px;width:300px;text-align:right;top:944.08px;color:#1e1e1e">-1,14</div>
<div class="t tv" style="left:142.0px;width:300px;text-align:right;top:944.08px;color:#1e1e1e">29,2%</div>
<div style="position:absolute;left:454.8px;top:942.98px;width:368.5px;height:19.94px;background:#ffffff;border-top:1.4px solid #cfcfcf;"></div>
<div class="t tv" style="left:204.8px;width:300px;text-align:right;top:944.08px;color:#2a2ab4">5,75</div>
<div class="t tv" style="left:540.6px;top:945.08px;color:#333;letter-spacing:0.3px">.....</div>
<div class="t tv" style="left:449.8px;width:300px;text-align:right;top:944.08px;color:#2a2ab4">-5,02</div>
<div class="t tv" style="left:510.8px;width:300px;text-align:right;top:944.08px;color:#2a2ab4">23,4%</div>
<div style="position:absolute;left:8px;top:962.42px;width:73px;height:18.94px;background:linear-gradient(#14838c 0%,#0b4e8e 45%,#061f8c 75%,#031a88 100%);border-top:1px solid #6ab8d8;"></div>
<div class="t" style="left:15px;top:961.92px;font-size:13px;font-weight:bold;color:#fff;transform:scaleY(1.15)">1820 P</div>
<div style="position:absolute;left:86.0px;top:962.82px;width:367.5px;height:19.94px;background:#ffffff;border-top:1.4px solid #cfcfcf;"></div>
<div class="t tv" style="left:-164.0px;width:300px;text-align:right;top:963.92px;color:#2a2ab4">1,05</div>
<div class="t tv" style="left:171.8px;top:964.92px;color:#333;letter-spacing:0.3px">.....</div>
<div class="t tv" style="left:81.0px;width:300px;text-align:right;top:963.92px;color:#2a2ab4">-1,03</div>
<div class="t tv" style="left:142.0px;width:300px;text-align:right;top:963.92px;color:#2a2ab4">29,9%</div>
<div style="position:absolute;left:454.8px;top:962.82px;width:368.5px;height:19.94px;background:#ffffff;border-top:1.4px solid #cfcfcf;"></div>
<div class="t tv" style="left:204.8px;width:300px;text-align:right;top:963.92px;color:#1e1e1e">5,35</div>
<div class="t tv" style="left:540.6px;top:964.92px;color:#333;letter-spacing:0.3px">.....</div>
<div class="t tv" style="left:449.8px;width:300px;text-align:right;top:963.92px;color:#1e1e1e">-4,65</div>
<div class="t tv" style="left:510.8px;width:300px;text-align:right;top:963.92px;color:#1e1e1e">23,8%</div>
<div style="position:absolute;left:8px;top:981.5px;width:73px;height:3px;background:#1a7a8a;border-top:1px solid #9ad"></div>
<div style="position:absolute;left:825px;top:225px;width:21px;height:376px;background:#f2f2f2;border-left:1px solid #dcdcdc;"></div>
<svg style="position:absolute;left:831px;top:234px" width="9" height="5"><path d="M0 5 H9 L4.5 0Z" fill="#555"/></svg>
<svg style="position:absolute;left:831px;top:589px" width="9" height="5"><path d="M0 0 H9 L4.5 5Z" fill="#555"/></svg>
<div style="position:absolute;left:828px;top:371px;width:15px;height:18px;border:1px solid #9a9a9a;border-radius:2px;background:linear-gradient(90deg,#f4f4f4,#dcdcdc)"><div style="margin:4px 3px;height:7px;border-top:1px solid #777;border-bottom:1px solid #777"><div style="margin-top:2px;border-top:1px solid #777"></div></div></div>
<div style="position:absolute;left:825px;top:606px;width:21px;height:377px;background:#f2f2f2;border-left:1px solid #dcdcdc;"></div>
<svg style="position:absolute;left:831px;top:615px" width="9" height="5"><path d="M0 5 H9 L4.5 0Z" fill="#555"/></svg>
<svg style="position:absolute;left:831px;top:971px" width="9" height="5"><path d="M0 0 H9 L4.5 5Z" fill="#555"/></svg>
<div style="position:absolute;left:828px;top:917px;width:15px;height:18px;border:1px solid #9a9a9a;border-radius:2px;background:linear-gradient(90deg,#f4f4f4,#dcdcdc)"><div style="margin:4px 3px;height:7px;border-top:1px solid #777;border-bottom:1px solid #777"><div style="margin-top:2px;border-top:1px solid #777"></div></div></div>
<div style="position:absolute;left:844.5px;top:225px;width:2px;height:760px;background:#fbfbfb"></div>
<div style="position:absolute;left:7px;top:984.7px;width:869px;height:5px;background:#f0f0f0;border-top:1px solid #b0b0b0"></div>
<div style="position:absolute;left:9.2px;top:990px;width:72.6px;height:21px;background:#808080;"></div>
<div class="hdr" style="left:9.2px;top:991px;width:72.6px;font-size:13.5px">Summary</div>
<div class="t" style="left:724px;top:991px;font-size:13.7px">Volty model: Var 1 day</div>
<div class="t" style="left:85px;top:1015px;font-size:13.5px">Net Reqmts</div>
<div class="t" style="left:171px;top:1015px;font-size:13.5px">Gross Reqmts</div>
<div class="t" style="left:-231.4px;width:300px;text-align:right;top:1041px;font-size:13.6px">Init</div>
<div class="t" style="left:-231.4px;width:300px;text-align:right;top:1063px;font-size:13.6px">Maint</div>
<div class="t" style="left:-231.4px;width:300px;text-align:right;top:1085px;font-size:13.6px">Cash/Init</div>
<div style="position:absolute;left:77.7px;top:1039px;width:89.60000000000001px;height:23.200000000000045px;border:1.5px solid #7a7a7a;background:#f0f0f0"></div>
<div style="position:absolute;left:77.7px;top:1060.7px;width:89.60000000000001px;height:23.700000000000045px;border:1.5px solid #7a7a7a;background:#f0f0f0"></div>
<div style="position:absolute;left:77.7px;top:1082.9px;width:89.60000000000001px;height:24.59999999999991px;border:1.5px solid #7a7a7a;background:#f0f0f0"></div>
<div class="t" style="left:-145.7px;width:300px;text-align:right;top:1041.6px;font-size:13.6px">4.104$</div>
<div class="t" style="left:-145.7px;width:300px;text-align:right;top:1063.6px;font-size:13.6px">2.827$</div>
<div class="t" style="left:-145.7px;width:300px;text-align:right;top:1086.2px;font-size:13.6px">0,27</div>
<div style="position:absolute;left:172.5px;top:1039px;width:89.60000000000002px;height:23.200000000000045px;border:1.5px solid #7a7a7a;background:#f0f0f0"></div>
<div style="position:absolute;left:172.5px;top:1060.7px;width:89.60000000000002px;height:23.700000000000045px;border:1.5px solid #7a7a7a;background:#f0f0f0"></div>
<div style="position:absolute;left:172.5px;top:1082.9px;width:89.60000000000002px;height:24.59999999999991px;border:1.5px solid #7a7a7a;background:#f0f0f0"></div>
<div class="t" style="left:-51.400000000000006px;width:300px;text-align:right;top:1041.6px;font-size:13.6px">5.224$</div>
<div class="t" style="left:-51.400000000000006px;width:300px;text-align:right;top:1063.6px;font-size:13.6px">3.947$</div>
<div class="t" style="left:-51.400000000000006px;width:300px;text-align:right;top:1086.2px;font-size:13.6px">0,21</div>
<div class="t" style="left:36.4px;width:300px;text-align:right;top:1019.5px;font-size:13.6px">Cash Flow</div>
<div class="t" style="left:36.4px;width:300px;text-align:right;top:1041px;font-size:13.6px">Cur. Value</div>
<div class="t" style="left:36.4px;width:300px;text-align:right;top:1063px;font-size:13.6px">Gain/Loss</div>
<div class="t" style="left:36.4px;width:300px;text-align:right;top:1085px;font-size:13.6px">Commis</div>
<div style="position:absolute;left:342px;top:1016.8px;width:90px;height:23.5px;border:1.5px solid #7a7a7a;background:#f0f0f0"></div>
<div style="position:absolute;left:342px;top:1038.8px;width:90px;height:23.5px;border:1.5px solid #7a7a7a;background:#f0f0f0"></div>
<div style="position:absolute;left:342px;top:1060.8px;width:90px;height:23.90000000000009px;border:1.5px solid #7a7a7a;background:#f0f0f0"></div>
<div style="position:absolute;left:342px;top:1083.2px;width:90px;height:24.299999999999955px;border:1.5px solid #7a7a7a;background:#f0f0f0"></div>
<div class="t" style="left:118.19999999999999px;width:300px;text-align:right;top:1019.6px;font-size:13.6px">+1.120$</div>
<div class="t" style="left:118.19999999999999px;width:300px;text-align:right;top:1041.6px;font-size:13.6px">-300$</div>
<div class="t" style="left:118.19999999999999px;width:300px;text-align:right;top:1063.8px;font-size:13.6px">+342$</div>
<div class="t" style="left:118.19999999999999px;width:300px;text-align:right;top:1086.4px;font-size:13.6px">10,40$</div>
<div class="t" style="left:196.3px;width:300px;text-align:right;top:1019px;font-size:13.6px">Delta</div>
<div class="t" style="left:196.3px;width:300px;text-align:right;top:1041px;font-size:13.6px">Gamma</div>
<div class="t" style="left:196.3px;width:300px;text-align:right;top:1063px;font-size:13.6px">Theta</div>
<div class="t" style="left:196.3px;width:300px;text-align:right;top:1085px;font-size:13.6px">Vega</div>
<div style="position:absolute;left:503.5px;top:1016.8px;width:66.79999999999995px;height:23.5px;border:1.5px solid #7a7a7a;background:#f0f0f0"></div>
<div style="position:absolute;left:503.5px;top:1038.8px;width:66.79999999999995px;height:23.5px;border:1.5px solid #7a7a7a;background:#f0f0f0"></div>
<div style="position:absolute;left:503.5px;top:1060.8px;width:66.79999999999995px;height:23.90000000000009px;border:1.5px solid #7a7a7a;background:#f0f0f0"></div>
<div style="position:absolute;left:503.5px;top:1083.2px;width:66.79999999999995px;height:24.299999999999955px;border:1.5px solid #7a7a7a;background:#f0f0f0"></div>
<div class="t" style="left:257px;width:300px;text-align:right;top:1019.6px;font-size:13.6px">-12,28</div>
<div class="t" style="left:257px;width:300px;text-align:right;top:1041.6px;font-size:13.6px">-0,58</div>
<div class="t" style="left:257px;width:300px;text-align:right;top:1063.8px;font-size:13.6px">34,61</div>
<div class="t" style="left:257px;width:300px;text-align:right;top:1086.4px;font-size:13.6px">-81,46</div>
<div class="t" style="left:339.5px;width:300px;text-align:right;top:1019px;font-size:13.6px">Avg.IV</div>
<div class="t" style="left:339.5px;width:300px;text-align:right;top:1041px;font-size:13.6px">Calls.IV</div>
<div class="t" style="left:339.5px;width:300px;text-align:right;top:1063px;font-size:13.6px">Puts.IV</div>
<div class="t" style="left:339.5px;width:300px;text-align:right;top:1085px;font-size:13.6px">P/C (Vol)</div>
<div style="position:absolute;left:645.3px;top:1016.8px;width:67.0px;height:23.5px;border:1.5px solid #7a7a7a;background:#f0f0f0"></div>
<div style="position:absolute;left:645.3px;top:1038.8px;width:67.0px;height:23.5px;border:1.5px solid #7a7a7a;background:#f0f0f0"></div>
<div style="position:absolute;left:645.3px;top:1060.8px;width:67.0px;height:23.90000000000009px;border:1.5px solid #7a7a7a;background:#f0f0f0"></div>
<div style="position:absolute;left:645.3px;top:1083.2px;width:67.0px;height:24.299999999999955px;border:1.5px solid #7a7a7a;background:#f0f0f0"></div>
<div class="t" style="left:398.5px;width:300px;text-align:right;top:1019.6px;font-size:13.6px">12,4%</div>
<div class="t" style="left:398.5px;width:300px;text-align:right;top:1041.6px;font-size:13.6px">12,4%</div>
<div class="t" style="left:398.5px;width:300px;text-align:right;top:1063.8px;font-size:13.6px">12,4%</div>
<div class="t" style="left:398.5px;width:300px;text-align:right;top:1086.4px;font-size:13.6px">1,45</div>
<div style="position:absolute;left:265px;top:1058.4px;width:180.6px;height:30.2px;border:3px solid #3ab570;border-radius:3px;background:rgba(70,195,120,0.42);"></div>
<div style="position:absolute;left:437px;top:1071px;width:3px;height:3px;background:#333"></div>
<div style="position:absolute;left:7px;top:1115.5px;width:869px;height:10px;background:#f0f0f0;border-top:1.5px solid #a8a8a8"></div>
<div class="t" style="left:905.3px;top:101px;font-size:13.3px">Number of Lines</div>
<div style="position:absolute;left:1012.7px;top:98.7px;width:29.3px;height:23.3px;background:#fff;border:1px solid #e4e4e4"></div>
<div class="t" style="left:1021px;top:100px;font-size:13.3px">5</div>
<div class="btn" style="left:1044px;top:100.7px;width:14.3px;height:9.6px;border-radius:2px"></div><svg style="position:absolute;left:1047px;top:103px" width="8" height="5"><path d="M0 5 H8 L4 0Z" fill="#111"/></svg>
<div class="btn" style="left:1044px;top:111.3px;width:14.3px;height:9.6px;border-radius:2px"></div><svg style="position:absolute;left:1047px;top:114px" width="8" height="5"><path d="M0 0 H8 L4 5Z" fill="#111"/></svg>
<div style="position:absolute;left:904px;top:126.7px;width:16px;height:16px;border:1px solid #8e8f8f;background:linear-gradient(135deg,#dcdcdc,#fbfbfb);"></div>
<svg style="position:absolute;left:906px;top:128.7px" width="12" height="12"><path d="M2 6 L5 10 L10 1" stroke="#3a4aa8" stroke-width="2" fill="none"/></svg>
<div style="position:absolute;left:904px;top:145.3px;width:16px;height:16px;border:1px solid #8e8f8f;background:linear-gradient(135deg,#dcdcdc,#fbfbfb);"></div>
<div class="t" style="left:924.4px;top:125px;font-size:13.3px">Step through dates</div>
<div class="t" style="left:924.4px;top:144px;font-size:13.3px">Step through volatilities</div>
<div style="position:absolute;left:1052px;top:163px;width:16px;height:7px;border:1px solid #c4c4c4;border-bottom:none"></div>
<div style="position:absolute;left:1077.3px;top:95.3px;width:785px;height:77.4px;background:#fff;border:1px solid #d4d4d4;"></div>
<div class="t" style="left:1080.7px;top:97px;font-size:13.3px;color:#26269a">Short 1 Jan15 2130 Call, Short 2 Jan15 1840 Puts</div>
<div class="t" style="left:1080.7px;top:113px;font-size:13.3px;color:#26269a">Prev Realized G/L -479$</div>
<div style="position:absolute;left:1868px;top:99px;width:86px;height:33px;border:2px solid #3d8fd0;border-radius:3px;background:linear-gradient(#f7f7f7,#ececec 50%,#dedede);"></div><div style="position:absolute;left:1871px;top:102px;width:80px;height:27px;border:1px dotted #333;"></div>
<svg style="position:absolute;left:1880px;top:106px" width="20" height="19" viewBox="0 0 20 19"><path d="M2 10 L7 16 L18 2" stroke="#107a20" stroke-width="3.6" fill="none" stroke-linecap="round"/></svg>
<div class="t" style="left:1902px;top:105px;font-size:14.5px;font-weight:bold;color:#111">Close</div>
<div style="position:absolute;left:1869px;top:138px;width:16px;height:16px;border:1px solid #8e8f8f;background:linear-gradient(135deg,#dcdcdc,#fbfbfb);"></div>
<svg style="position:absolute;left:1871px;top:140px" width="12" height="12"><path d="M2 6 L5 10 L10 1" stroke="#3a4aa8" stroke-width="2" fill="none"/></svg>
<div style="position:absolute;left:1869px;top:156px;width:16px;height:16px;border:1px solid #8e8f8f;background:linear-gradient(135deg,#dcdcdc,#fbfbfb);"></div>
<svg style="position:absolute;left:1871px;top:158px" width="12" height="12"><path d="M2 6 L5 10 L10 1" stroke="#3a4aa8" stroke-width="2" fill="none"/></svg>
<div class="t" style="left:1888px;top:136px;font-size:13.3px">Show BEs</div>
<div class="t" style="left:1888px;top:154px;font-size:13.3px">Show O,S</div>
<div style="position:absolute;left:898.3px;top:176px;width:556px;height:55.3px;border:1px solid #b8b8b8;box-shadow:inset 1px 1px 0 #fff;"></div>
<div class="t" style="left:908.7px;top:178px;font-size:13.3px">Max Proj Date</div>
<div style="position:absolute;left:908.7px;top:198px;width:100px;height:22.7px;background:#fff;border:1px solid #e8e8e8"></div>
<div class="t" style="left:911px;top:199px;font-size:13.3px">17 de ene de 20</div>
<div class="t" style="left:1022.7px;top:178px;font-size:13.3px">Volty Chg</div>
<div style="position:absolute;left:1022.7px;top:198px;width:61.3px;height:22.7px;background:#fff;border:1px solid #e8e8e8"></div>
<div class="t" style="left:775.3px;width:300px;text-align:right;top:199px;font-size:13.3px">0,0%</div>
<div class="btn" style="left:1092px;top:181.3px;width:19.6px;height:17.4px;"></div><div class="t" style="left:1095px;top:178px;font-size:10px">...</div>
<div class="t" style="left:1092px;top:200px;font-size:13.3px">Pts</div>
<div class="t" style="left:1126.3px;top:178px;font-size:13.3px">Amount Provided</div>
<div style="position:absolute;left:1128px;top:198px;width:100px;height:23px;background:#ececec;border:1px solid #dcdcdc"></div>
<div class="t" style="left:1131.4px;top:199px;font-size:13.3px">4.099$</div>
<div class="t" style="left:1246px;top:178px;font-size:13.3px">Vertical Axis</div>
<div style="position:absolute;left:1246px;top:197px;width:101.8px;height:23.4px;border:1px solid #8a8a8a;border-radius:3px;background:linear-gradient(#f4f4f4,#e6e6e6 50%,#dadada)"></div>
<div class="t" style="left:1250px;top:199px;font-size:13.3px">Profit/Loss</div>
<svg style="position:absolute;left:1332px;top:206px" width="10" height="6"><path d="M0 0 H10 L5 6Z" fill="#111"/></svg>
<div class="t" style="left:1368.8px;top:179px;font-size:13.3px">Horiz Axis</div>
<div class="t" style="left:1359px;top:194px;font-size:13.5px;font-weight:bold;color:#222">L</div>
<div class="t" style="left:1430px;top:194px;font-size:13.5px;font-weight:bold;color:#222">R</div>
<div style="position:absolute;left:1360px;top:219px;width:7px;height:2px;background:#d02020"></div>
<div class="t" style="left:1431px;top:210px;font-size:14px;font-weight:bold;color:#20a040">+</div>
<div style="position:absolute;left:1371px;top:200px;width:57.5px;height:6px;border:1px solid #d6d6d6;background:#ebebeb"></div>
<div style="position:absolute;left:1398px;top:198px;width:5px;height:11px;border:1px solid #a8a8a8;border-radius:0 0 3px 3px;background:#f6f6f6"></div>
<div style="position:absolute;left:1371px;top:215px;width:57.5px;height:6px;border:1px solid #d6d6d6;background:#ebebeb"></div>
<div style="position:absolute;left:1398px;top:213px;width:5px;height:11px;border:1px solid #a8a8a8;border-radius:0 0 3px 3px;background:#f6f6f6"></div>
<svg style="position:absolute;left:0;top:0" width="1969" height="1125" viewBox="0 0 1969 1125"><defs><clipPath id="plot"><rect x="981.7" y="267.5" width="906.8" height="679"/></clipPath></defs><rect x="917" y="235.5" width="1043" height="772" fill="#fff" stroke="#2a2a2a" stroke-width="2"/><rect x="916" y="1006.3" width="1045" height="3" fill="#555"/><text x="1434.5" y="255.5" font-size="13.2" text-anchor="middle" fill="#1a1a1a" font-family="Liberation Sans">Profit/Loss by Change in ES Mar Futures Price</text><text x="920" y="267" font-size="13" fill="#1a1a1a" font-family="Liberation Sans">$</text><line x1="1042.2" y1="267.5" x2="1042.2" y2="946.5" stroke="#c6c6c6" stroke-width="1.3"/><line x1="1102.6" y1="267.5" x2="1102.6" y2="946.5" stroke="#c6c6c6" stroke-width="1.3"/><line x1="1163.1" y1="267.5" x2="1163.1" y2="946.5" stroke="#c6c6c6" stroke-width="1.3"/><line x1="1223.5" y1="267.5" x2="1223.5" y2="946.5" stroke="#c6c6c6" stroke-width="1.3"/><line x1="1284.0" y1="267.5" x2="1284.0" y2="946.5" stroke="#c6c6c6" stroke-width="1.3"/><line x1="1344.4" y1="267.5" x2="1344.4" y2="946.5" stroke="#c6c6c6" stroke-width="1.3"/><line x1="1404.9" y1="267.5" x2="1404.9" y2="946.5" stroke="#c6c6c6" stroke-width="1.3"/><line x1="1465.3" y1="267.5" x2="1465.3" y2="946.5" stroke="#c6c6c6" stroke-width="1.3"/><line x1="1525.8" y1="267.5" x2="1525.8" y2="946.5" stroke="#c6c6c6" stroke-width="1.3"/><line x1="1586.2" y1="267.5" x2="1586.2" y2="946.5" stroke="#c6c6c6" stroke-width="1.3"/><line x1="1646.7" y1="267.5" x2="1646.7" y2="946.5" stroke="#c6c6c6" stroke-width="1.3"/><line x1="1707.1" y1="267.5" x2="1707.1" y2="946.5" stroke="#c6c6c6" stroke-width="1.3"/><line x1="1767.6" y1="267.5" x2="1767.6" y2="946.5" stroke="#c6c6c6" stroke-width="1.3"/><line x1="1828.0" y1="267.5" x2="1828.0" y2="946.5" stroke="#c6c6c6" stroke-width="1.3"/><line x1="981.7" y1="290.6" x2="1888.5" y2="290.6" stroke="#c6c6c6" stroke-width="1.3"/><text x="974" y="291.4" font-size="13" text-anchor="end" fill="#1a1a1a" font-family="Liberation Sans">1200</text><text x="1895" y="291.4" font-size="13" fill="#1a1a1a" font-family="Liberation Sans">+29%</text><line x1="981.7" y1="321.8" x2="1888.5" y2="321.8" stroke="#c6c6c6" stroke-width="1.3"/><text x="974" y="322.6" font-size="13" text-anchor="end" fill="#1a1a1a" font-family="Liberation Sans">900</text><text x="1895" y="322.6" font-size="13" fill="#1a1a1a" font-family="Liberation Sans">+22%</text><line x1="981.7" y1="353.0" x2="1888.5" y2="353.0" stroke="#c6c6c6" stroke-width="1.3"/><text x="974" y="353.8" font-size="13" text-anchor="end" fill="#1a1a1a" font-family="Liberation Sans">600</text><text x="1895" y="353.8" font-size="13" fill="#1a1a1a" font-family="Liberation Sans">+15%</text><line x1="981.7" y1="384.2" x2="1888.5" y2="384.2" stroke="#c6c6c6" stroke-width="1.3"/><text x="974" y="385.0" font-size="13" text-anchor="end" fill="#1a1a1a" font-family="Liberation Sans">300</text><text x="1895" y="385.0" font-size="13" fill="#1a1a1a" font-family="Liberation Sans">+7%</text><text x="974" y="416.2" font-size="13" text-anchor="end" fill="#1a1a1a" font-family="Liberation Sans">0</text><text x="1895" y="416.2" font-size="13" fill="#1a1a1a" font-family="Liberation Sans">0%</text><line x1="981.7" y1="446.6" x2="1888.5" y2="446.6" stroke="#c6c6c6" stroke-width="1.3"/><text x="974" y="447.4" font-size="13" text-anchor="end" fill="#1a1a1a" font-family="Liberation Sans">-300</text><text x="1895" y="447.4" font-size="13" fill="#1a1a1a" font-family="Liberation Sans">-7%</text><line x1="981.7" y1="477.8" x2="1888.5" y2="477.8" stroke="#c6c6c6" stroke-width="1.3"/><text x="974" y="478.6" font-size="13" text-anchor="end" fill="#1a1a1a" font-family="Liberation Sans">-600</text><text x="1895" y="478.6" font-size="13" fill="#1a1a1a" font-family="Liberation Sans">-15%</text><line x1="981.7" y1="509.0" x2="1888.5" y2="509.0" stroke="#c6c6c6" stroke-width="1.3"/><text x="974" y="509.8" font-size="13" text-anchor="end" fill="#1a1a1a" font-family="Liberation Sans">-900</text><text x="1895" y="509.8" font-size="13" fill="#1a1a1a" font-family="Liberation Sans">-22%</text><line x1="981.7" y1="540.2" x2="1888.5" y2="540.2" stroke="#c6c6c6" stroke-width="1.3"/><text x="974" y="541.0" font-size="13" text-anchor="end" fill="#1a1a1a" font-family="Liberation Sans">-1200</text><text x="1895" y="541.0" font-size="13" fill="#1a1a1a" font-family="Liberation Sans">-29%</text><line x1="981.7" y1="571.4" x2="1888.5" y2="571.4" stroke="#c6c6c6" stroke-width="1.3"/><text x="974" y="572.2" font-size="13" text-anchor="end" fill="#1a1a1a" font-family="Liberation Sans">-1500</text><text x="1895" y="572.2" font-size="13" fill="#1a1a1a" font-family="Liberation Sans">-37%</text><line x1="981.7" y1="602.6" x2="1888.5" y2="602.6" stroke="#c6c6c6" stroke-width="1.3"/><text x="974" y="603.4" font-size="13" text-anchor="end" fill="#1a1a1a" font-family="Liberation Sans">-1800</text><text x="1895" y="603.4" font-size="13" fill="#1a1a1a" font-family="Liberation Sans">-44%</text><line x1="981.7" y1="633.8" x2="1888.5" y2="633.8" stroke="#c6c6c6" stroke-width="1.3"/><text x="974" y="634.6" font-size="13" text-anchor="end" fill="#1a1a1a" font-family="Liberation Sans">-2100</text><text x="1895" y="634.6" font-size="13" fill="#1a1a1a" font-family="Liberation Sans">-51%</text><line x1="981.7" y1="665.0" x2="1888.5" y2="665.0" stroke="#c6c6c6" stroke-width="1.3"/><text x="974" y="665.8" font-size="13" text-anchor="end" fill="#1a1a1a" font-family="Liberation Sans">-2400</text><text x="1895" y="665.8" font-size="13" fill="#1a1a1a" font-family="Liberation Sans">-59%</text><line x1="981.7" y1="696.2" x2="1888.5" y2="696.2" stroke="#c6c6c6" stroke-width="1.3"/><text x="974" y="697.0" font-size="13" text-anchor="end" fill="#1a1a1a" font-family="Liberation Sans">-2700</text><text x="1895" y="697.0" font-size="13" fill="#1a1a1a" font-family="Liberation Sans">-66%</text><line x1="981.7" y1="727.4" x2="1888.5" y2="727.4" stroke="#c6c6c6" stroke-width="1.3"/><text x="974" y="728.2" font-size="13" text-anchor="end" fill="#1a1a1a" font-family="Liberation Sans">-3000</text><text x="1895" y="728.2" font-size="13" fill="#1a1a1a" font-family="Liberation Sans">-73%</text><line x1="981.7" y1="758.6" x2="1888.5" y2="758.6" stroke="#c6c6c6" stroke-width="1.3"/><text x="974" y="759.4" font-size="13" text-anchor="end" fill="#1a1a1a" font-family="Liberation Sans">-3300</text><text x="1895" y="759.4" font-size="13" fill="#1a1a1a" font-family="Liberation Sans">-81%</text><line x1="981.7" y1="789.8" x2="1888.5" y2="789.8" stroke="#c6c6c6" stroke-width="1.3"/><text x="974" y="790.6" font-size="13" text-anchor="end" fill="#1a1a1a" font-family="Liberation Sans">-3600</text><text x="1895" y="790.6" font-size="13" fill="#1a1a1a" font-family="Liberation Sans">-88%</text><line x1="981.7" y1="821.0" x2="1888.5" y2="821.0" stroke="#c6c6c6" stroke-width="1.3"/><text x="974" y="821.8" font-size="13" text-anchor="end" fill="#1a1a1a" font-family="Liberation Sans">-3900</text><text x="1895" y="821.8" font-size="13" fill="#1a1a1a" font-family="Liberation Sans">-95%</text><line x1="981.7" y1="852.2" x2="1888.5" y2="852.2" stroke="#c6c6c6" stroke-width="1.3"/><text x="974" y="853.0" font-size="13" text-anchor="end" fill="#1a1a1a" font-family="Liberation Sans">-4200</text><text x="1895" y="853.0" font-size="13" fill="#1a1a1a" font-family="Liberation Sans">-100%</text><line x1="981.7" y1="883.4" x2="1888.5" y2="883.4" stroke="#c6c6c6" stroke-width="1.3"/><text x="974" y="884.2" font-size="13" text-anchor="end" fill="#1a1a1a" font-family="Liberation Sans">-4500</text><text x="1895" y="884.2" font-size="13" fill="#1a1a1a" font-family="Liberation Sans">-110%</text><line x1="981.7" y1="914.6" x2="1888.5" y2="914.6" stroke="#c6c6c6" stroke-width="1.3"/><text x="974" y="915.4" font-size="13" text-anchor="end" fill="#1a1a1a" font-family="Liberation Sans">-4800</text><text x="1895" y="915.4" font-size="13" fill="#1a1a1a" font-family="Liberation Sans">-120%</text><line x1="981.7" y1="945.8" x2="1888.5" y2="945.8" stroke="#c6c6c6" stroke-width="1.3"/><text x="974" y="946.6" font-size="13" text-anchor="end" fill="#1a1a1a" font-family="Liberation Sans">-5100</text><text x="1895" y="946.6" font-size="13" fill="#1a1a1a" font-family="Liberation Sans">-120%</text><line x1="981.7" y1="946.5" x2="981.7" y2="950.0" stroke="#222" stroke-width="1.5"/><text x="981.7" y="966.5" font-size="13" text-anchor="middle" fill="#1a1a1a" font-family="Liberation Sans">1795,10</text><text x="981.7" y="985.5" font-size="13" text-anchor="middle" fill="#1a1a1a" font-family="Liberation Sans">-13,7%</text><line x1="1042.2" y1="946.5" x2="1042.2" y2="950.0" stroke="#222" stroke-width="1.5"/><text x="1042.2" y="966.5" font-size="13" text-anchor="middle" fill="#1a1a1a" font-family="Liberation Sans">1820,10</text><text x="1042.2" y="985.5" font-size="13" text-anchor="middle" fill="#1a1a1a" font-family="Liberation Sans">-12,5%</text><line x1="1102.6" y1="946.5" x2="1102.6" y2="950.0" stroke="#222" stroke-width="1.5"/><text x="1102.6" y="966.5" font-size="13" text-anchor="middle" fill="#1a1a1a" font-family="Liberation Sans">1845,10</text><text x="1102.6" y="985.5" font-size="13" text-anchor="middle" fill="#1a1a1a" font-family="Liberation Sans">-11,3%</text><line x1="1163.1" y1="946.5" x2="1163.1" y2="950.0" stroke="#222" stroke-width="1.5"/><text x="1163.1" y="966.5" font-size="13" text-anchor="middle" fill="#1a1a1a" font-family="Liberation Sans">1870,10</text><text x="1163.1" y="985.5" font-size="13" text-anchor="middle" fill="#1a1a1a" font-family="Liberation Sans">-10,1%</text><line x1="1223.5" y1="946.5" x2="1223.5" y2="950.0" stroke="#222" stroke-width="1.5"/><text x="1223.5" y="966.5" font-size="13" text-anchor="middle" fill="#1a1a1a" font-family="Liberation Sans">1895,10</text><text x="1223.5" y="985.5" font-size="13" text-anchor="middle" fill="#1a1a1a" font-family="Liberation Sans">-8,9%</text><line x1="1284.0" y1="946.5" x2="1284.0" y2="950.0" stroke="#222" stroke-width="1.5"/><text x="1284.0" y="966.5" font-size="13" text-anchor="middle" fill="#1a1a1a" font-family="Liberation Sans">1920,10</text><text x="1284.0" y="985.5" font-size="13" text-anchor="middle" fill="#1a1a1a" font-family="Liberation Sans">-7,7%</text><line x1="1344.4" y1="946.5" x2="1344.4" y2="950.0" stroke="#222" stroke-width="1.5"/><text x="1344.4" y="966.5" font-size="13" text-anchor="middle" fill="#1a1a1a" font-family="Liberation Sans">1945,10</text><text x="1344.4" y="985.5" font-size="13" text-anchor="middle" fill="#1a1a1a" font-family="Liberation Sans">-6,5%</text><line x1="1404.9" y1="946.5" x2="1404.9" y2="950.0" stroke="#222" stroke-width="1.5"/><text x="1404.9" y="966.5" font-size="13" text-anchor="middle" fill="#1a1a1a" font-family="Liberation Sans">1970,10</text><text x="1404.9" y="985.5" font-size="13" text-anchor="middle" fill="#1a1a1a" font-family="Liberation Sans">-5,3%</text><line x1="1465.3" y1="946.5" x2="1465.3" y2="950.0" stroke="#222" stroke-width="1.5"/><text x="1465.3" y="966.5" font-size="13" text-anchor="middle" fill="#1a1a1a" font-family="Liberation Sans">1995,10</text><text x="1465.3" y="985.5" font-size="13" text-anchor="middle" fill="#1a1a1a" font-family="Liberation Sans">-4,1%</text><line x1="1525.8" y1="946.5" x2="1525.8" y2="950.0" stroke="#222" stroke-width="1.5"/><text x="1525.8" y="966.5" font-size="13" text-anchor="middle" fill="#1a1a1a" font-family="Liberation Sans">2020,10</text><text x="1525.8" y="985.5" font-size="13" text-anchor="middle" fill="#1a1a1a" font-family="Liberation Sans">-2,9%</text><line x1="1586.2" y1="946.5" x2="1586.2" y2="950.0" stroke="#222" stroke-width="1.5"/><text x="1586.2" y="966.5" font-size="13" text-anchor="middle" fill="#1a1a1a" font-family="Liberation Sans">2045,10</text><text x="1586.2" y="985.5" font-size="13" text-anchor="middle" fill="#1a1a1a" font-family="Liberation Sans">-1,7%</text><line x1="1646.7" y1="946.5" x2="1646.7" y2="950.0" stroke="#222" stroke-width="1.5"/><text x="1646.7" y="966.5" font-size="13" text-anchor="middle" fill="#1a1a1a" font-family="Liberation Sans">2070,10</text><text x="1646.7" y="985.5" font-size="13" text-anchor="middle" fill="#1a1a1a" font-family="Liberation Sans">-0,5%</text><line x1="1707.1" y1="946.5" x2="1707.1" y2="950.0" stroke="#222" stroke-width="1.5"/><text x="1707.1" y="966.5" font-size="13" text-anchor="middle" fill="#1a1a1a" font-family="Liberation Sans">2095,10</text><text x="1707.1" y="985.5" font-size="13" text-anchor="middle" fill="#1a1a1a" font-family="Liberation Sans">+0,7%</text><line x1="1767.6" y1="946.5" x2="1767.6" y2="950.0" stroke="#222" stroke-width="1.5"/><text x="1767.6" y="966.5" font-size="13" text-anchor="middle" fill="#1a1a1a" font-family="Liberation Sans">2120,10</text><text x="1767.6" y="985.5" font-size="13" text-anchor="middle" fill="#1a1a1a" font-family="Liberation Sans">+1,9%</text><line x1="1828.0" y1="946.5" x2="1828.0" y2="950.0" stroke="#222" stroke-width="1.5"/><text x="1828.0" y="966.5" font-size="13" text-anchor="middle" fill="#1a1a1a" font-family="Liberation Sans">2145,10</text><text x="1828.0" y="985.5" font-size="13" text-anchor="middle" fill="#1a1a1a" font-family="Liberation Sans">+3,1%</text><line x1="1888.5" y1="946.5" x2="1888.5" y2="950.0" stroke="#222" stroke-width="1.5"/><text x="1888.5" y="966.5" font-size="13" text-anchor="middle" fill="#1a1a1a" font-family="Liberation Sans">2170,10</text><text x="1888.5" y="985.5" font-size="13" text-anchor="middle" fill="#1a1a1a" font-family="Liberation Sans">+4,3%</text><rect x="1094.2" y="344" width="695" height="70.5" fill="rgba(70,190,120,0.45)" stroke="#48bd7c" stroke-width="4"/><line x1="1092.4" y1="414" x2="1791" y2="414" stroke="#1f9a55" stroke-width="3"/><rect x="981.7" y="267.5" width="906.8" height="679.0" fill="none" stroke="#1a1a1a" stroke-width="1.6"/><line x1="981.7" y1="415.4" x2="1093" y2="415.4" stroke="#111" stroke-width="2.6"/><line x1="1791" y1="415.4" x2="1888.5" y2="415.4" stroke="#111" stroke-width="2.6"/><line x1="1356.8" y1="267.5" x2="1356.8" y2="943" stroke="#7a0a70" stroke-width="2.2" stroke-dasharray="2.5 3"/><line x1="1746.2" y1="267.5" x2="1746.2" y2="943" stroke="#7a0a70" stroke-width="2.2" stroke-dasharray="2.5 3"/><text transform="translate(1371,940) rotate(-90)" font-size="10" fill="#222" font-family="Liberation Sans">1950,00 (-6%)</text><text transform="translate(1762,939) rotate(-90)" font-size="10" fill="#222" font-family="Liberation Sans">2111,00 (+1%)</text><line x1="1672.5" y1="267.5" x2="1672.5" y2="946.5" stroke="#2a9a8a" stroke-width="1.5"/><polyline clip-path="url(#plot)" points="981.7,815.4 1090.3,348.5 1791.5,348.5 1888.5,557.0" fill="none" stroke="#1c1c68" stroke-width="1.7"/><polyline clip-path="url(#plot)" points="981.7,821.3 984.0,812.3 986.2,803.4 988.5,794.5 990.8,785.7 993.0,777.0 995.3,768.3 997.6,759.8 999.8,751.3 1002.1,742.9 1004.4,734.6 1006.6,726.4 1008.9,718.3 1011.2,710.3 1013.4,702.4 1015.7,694.6 1018.0,686.9 1020.2,679.4 1022.5,671.9 1024.8,664.5 1027.0,657.3 1029.3,650.2 1031.6,643.1 1033.8,636.2 1036.1,629.4 1038.4,622.8 1040.6,616.2 1042.9,609.8 1045.2,603.5 1047.4,597.3 1049.7,591.3 1052.0,585.3 1054.2,579.5 1056.5,573.8 1058.8,568.2 1061.0,562.7 1063.3,557.4 1065.6,552.1 1067.8,547.0 1070.1,542.0 1072.4,537.1 1074.6,532.3 1076.9,527.6 1079.2,523.0 1081.4,518.5 1083.7,514.2 1086.0,509.9 1088.2,505.7 1090.5,501.7 1092.8,497.7 1095.0,493.8 1097.3,490.1 1099.6,486.4 1101.8,482.8 1104.1,479.3 1106.4,475.9 1108.6,472.6 1110.9,469.4 1113.2,466.3 1115.4,463.3 1117.7,460.3 1120.0,457.4 1122.2,454.6 1124.5,451.9 1126.8,449.2 1129.0,446.6 1131.3,444.1 1133.6,441.6 1135.8,439.3 1138.1,436.9 1140.4,434.7 1142.6,432.5 1144.9,430.3 1147.2,428.2 1149.4,426.2 1151.7,424.2 1154.0,422.3 1156.2,420.4 1158.5,418.6 1160.8,416.9 1163.1,415.1 1165.3,413.5 1167.6,411.9 1169.9,410.4 1172.1,408.9 1174.4,407.5 1176.7,406.1 1178.9,404.7 1181.2,403.4 1183.5,402.1 1185.7,400.8 1188.0,399.6 1190.3,398.4 1192.5,397.2 1194.8,396.1 1197.1,395.0 1199.3,393.9 1201.6,392.9 1203.9,391.9 1206.1,390.9 1208.4,389.9 1210.7,389.0 1212.9,388.1 1215.2,387.2 1217.5,386.3 1219.7,385.5 1222.0,384.7 1224.3,383.9 1226.5,383.1 1228.8,382.3 1231.1,381.6 1233.3,380.9 1235.6,380.2 1237.9,379.5 1240.1,378.8 1242.4,378.2 1244.7,377.5 1246.9,376.9 1249.2,376.3 1251.5,375.7 1253.7,375.2 1256.0,374.6 1258.3,374.1 1260.5,373.5 1262.8,373.0 1265.1,372.5 1267.3,372.0 1269.6,371.6 1271.9,371.1 1274.1,370.6 1276.4,370.2 1278.7,369.8 1280.9,369.4 1283.2,368.9 1285.5,368.5 1287.7,368.1 1290.0,367.7 1292.3,367.3 1294.5,366.9 1296.8,366.5 1299.1,366.1 1301.3,365.8 1303.6,365.4 1305.9,365.1 1308.1,364.8 1310.4,364.4 1312.7,364.1 1314.9,363.8 1317.2,363.5 1319.5,363.2 1321.7,362.9 1324.0,362.7 1326.3,362.4 1328.5,362.1 1330.8,361.9 1333.1,361.6 1335.3,361.4 1337.6,361.2 1339.9,360.9 1342.1,360.7 1344.4,360.5 1346.7,360.1 1348.9,359.8 1351.2,359.4 1353.5,359.1 1355.7,358.7 1358.0,358.4 1360.3,358.1 1362.5,357.8 1364.8,357.5 1367.1,357.2 1369.3,357.0 1371.6,356.7 1373.9,356.5 1376.1,356.2 1378.4,356.0 1380.7,355.8 1382.9,355.6 1385.2,355.4 1387.5,355.2 1389.7,355.0 1392.0,354.8 1394.3,354.7 1396.5,354.5 1398.8,354.4 1401.1,354.2 1403.3,354.1 1405.6,354.0 1407.9,353.8 1410.1,353.6 1412.4,353.5 1414.7,353.3 1416.9,353.2 1419.2,353.1 1421.5,352.9 1423.7,352.8 1426.0,352.7 1428.3,352.6 1430.5,352.6 1432.8,352.5 1435.1,352.4 1437.3,352.3 1439.6,352.3 1441.9,352.2 1444.1,352.2 1446.4,352.1 1448.7,352.1 1450.9,352.1 1453.2,352.1 1455.5,352.1 1457.7,352.1 1460.0,352.1 1462.3,352.1 1464.5,352.1 1466.8,352.0 1469.1,352.0 1471.3,352.0 1473.6,352.0 1475.9,351.9 1478.1,351.9 1480.4,351.9 1482.7,351.9 1484.9,351.9 1487.2,351.9 1489.5,351.9 1491.7,352.0 1494.0,352.0 1496.3,352.0 1498.5,352.0 1500.8,352.1 1503.1,352.1 1505.3,352.1 1507.6,352.2 1509.9,352.2 1512.1,352.3 1514.4,352.3 1516.7,352.4 1518.9,352.4 1521.2,352.5 1523.5,352.5 1525.8,352.6 1528.0,352.5 1530.3,352.5 1532.6,352.4 1534.8,352.3 1537.1,352.3 1539.4,352.2 1541.6,352.2 1543.9,352.1 1546.2,352.1 1548.4,352.0 1550.7,352.0 1553.0,351.9 1555.2,351.9 1557.5,351.8 1559.8,351.8 1562.0,351.7 1564.3,351.7 1566.6,351.6 1568.8,351.6 1571.1,351.6 1573.4,351.5 1575.6,351.5 1577.9,351.4 1580.2,351.4 1582.4,351.4 1584.7,351.3 1587.0,351.3 1589.2,351.3 1591.5,351.2 1593.8,351.2 1596.0,351.2 1598.3,351.2 1600.6,351.1 1602.8,351.1 1605.1,351.1 1607.4,351.1 1609.6,351.1 1611.9,351.0 1614.2,351.0 1616.4,351.0 1618.7,351.0 1621.0,351.0 1623.2,351.0 1625.5,350.9 1627.8,350.9 1630.0,350.9 1632.3,350.9 1634.6,350.9 1636.8,350.9 1639.1,350.9 1641.4,350.9 1643.6,350.8 1645.9,350.8 1648.2,350.9 1650.4,350.9 1652.7,351.0 1655.0,351.0 1657.2,351.1 1659.5,351.1 1661.8,351.2 1664.0,351.2 1666.3,351.3 1668.6,351.4 1670.8,351.4 1673.1,351.5 1675.4,351.6 1677.6,351.7 1679.9,351.9 1682.2,352.0 1684.4,352.1 1686.7,352.3 1689.0,352.4 1691.2,352.5 1693.5,352.7 1695.8,352.9 1698.0,353.1 1700.3,353.2 1702.6,353.4 1704.8,353.6 1707.1,353.9 1709.4,354.2 1711.6,354.5 1713.9,354.9 1716.2,355.3 1718.4,355.7 1720.7,356.2 1723.0,356.6 1725.2,357.1 1727.5,357.6 1729.8,358.2 1732.0,358.8 1734.3,359.4 1736.6,360.0 1738.8,360.7 1741.1,361.4 1743.4,362.2 1745.6,363.0 1747.9,364.2 1750.2,365.5 1752.4,366.9 1754.7,368.4 1757.0,369.9 1759.2,371.5 1761.5,373.2 1763.8,375.0 1766.0,376.8 1768.3,378.8 1770.6,380.9 1772.8,383.1 1775.1,385.4 1777.4,387.7 1779.6,390.2 1781.9,392.7 1784.2,395.3 1786.4,398.0 1788.7,400.7 1791.0,403.5 1793.2,406.4 1795.5,409.3 1797.8,412.3 1800.0,415.4 1802.3,418.5 1804.6,421.7 1806.8,425.0 1809.1,428.3 1811.4,431.6 1813.6,435.0 1815.9,438.5 1818.2,442.0 1820.4,445.6 1822.7,449.2 1825.0,452.9 1827.2,456.6 1829.5,460.4 1831.8,464.3 1834.0,468.3 1836.3,472.3 1838.6,476.3 1840.8,480.4 1843.1,484.5 1845.4,488.6 1847.6,492.8 1849.9,497.0 1852.2,501.2 1854.4,505.4 1856.7,509.7 1859.0,513.9 1861.2,518.3 1863.5,522.6 1865.8,526.9 1868.0,531.3 1870.3,535.7 1872.6,540.1 1874.8,544.5 1877.1,549.0 1879.4,553.4 1881.6,557.9 1883.9,562.4 1886.2,566.9 1888.5,571.4" fill="none" stroke="#1c2466" stroke-width="2.1" stroke-dasharray="17 6"/><polyline clip-path="url(#plot)" points="981.7,864.0 984.0,856.6 986.2,849.2 988.5,841.9 990.8,834.7 993.0,827.6 995.3,820.6 997.6,813.6 999.8,806.7 1002.1,799.9 1004.4,793.1 1006.6,786.5 1008.9,779.9 1011.2,773.3 1013.4,766.9 1015.7,760.5 1018.0,754.2 1020.2,748.0 1022.5,741.9 1024.8,735.8 1027.0,729.8 1029.3,723.9 1031.6,718.1 1033.8,712.3 1036.1,706.6 1038.4,701.0 1040.6,695.5 1042.9,690.0 1045.2,684.3 1047.4,678.7 1049.7,673.2 1052.0,667.7 1054.2,662.3 1056.5,657.0 1058.8,651.8 1061.0,646.6 1063.3,641.5 1065.6,636.4 1067.8,631.5 1070.1,626.6 1072.4,621.7 1074.6,617.0 1076.9,612.3 1079.2,607.6 1081.4,603.0 1083.7,598.5 1086.0,594.1 1088.2,589.7 1090.5,585.4 1092.8,581.2 1095.0,577.0 1097.3,572.9 1099.6,568.8 1101.8,564.9 1104.1,561.0 1106.4,557.2 1108.6,553.4 1110.9,549.7 1113.2,546.1 1115.4,542.5 1117.7,539.0 1120.0,535.5 1122.2,532.1 1124.5,528.8 1126.8,525.5 1129.0,522.3 1131.3,519.1 1133.6,515.9 1135.8,512.9 1138.1,509.9 1140.4,506.9 1142.6,504.0 1144.9,501.1 1147.2,498.3 1149.4,495.5 1151.7,492.8 1154.0,490.1 1156.2,487.5 1158.5,484.9 1160.8,482.4 1163.1,479.9 1165.3,477.5 1167.6,475.1 1169.9,472.7 1172.1,470.4 1174.4,468.2 1176.7,465.9 1178.9,463.8 1181.2,461.6 1183.5,459.5 1185.7,457.5 1188.0,455.5 1190.3,453.5 1192.5,451.5 1194.8,449.6 1197.1,447.7 1199.3,445.9 1201.6,444.1 1203.9,442.3 1206.1,440.6 1208.4,438.9 1210.7,437.2 1212.9,435.6 1215.2,433.9 1217.5,432.4 1219.7,430.8 1222.0,429.3 1224.3,427.8 1226.5,426.3 1228.8,424.9 1231.1,423.4 1233.3,422.0 1235.6,420.7 1237.9,419.3 1240.1,418.0 1242.4,416.7 1244.7,415.5 1246.9,414.3 1249.2,413.2 1251.5,412.1 1253.7,411.0 1256.0,409.9 1258.3,408.9 1260.5,407.9 1262.8,406.9 1265.1,405.9 1267.3,405.0 1269.6,404.0 1271.9,403.1 1274.1,402.2 1276.4,401.3 1278.7,400.5 1280.9,399.7 1283.2,398.8 1285.5,398.0 1287.7,397.1 1290.0,396.3 1292.3,395.5 1294.5,394.7 1296.8,393.9 1299.1,393.1 1301.3,392.4 1303.6,391.6 1305.9,390.9 1308.1,390.2 1310.4,389.6 1312.7,388.9 1314.9,388.2 1317.2,387.6 1319.5,387.0 1321.7,386.4 1324.0,385.8 1326.3,385.2 1328.5,384.7 1330.8,384.1 1333.1,383.6 1335.3,383.1 1337.6,382.6 1339.9,382.1 1342.1,381.6 1344.4,381.2 1346.7,380.5 1348.9,379.7 1351.2,379.0 1353.5,378.3 1355.7,377.7 1358.0,377.0 1360.3,376.4 1362.5,375.8 1364.8,375.2 1367.1,374.6 1369.3,374.1 1371.6,373.6 1373.9,373.0 1376.1,372.5 1378.4,372.0 1380.7,371.6 1382.9,371.1 1385.2,370.7 1387.5,370.3 1389.7,369.8 1392.0,369.5 1394.3,369.1 1396.5,368.7 1398.8,368.4 1401.1,368.0 1403.3,367.7 1405.6,367.4 1407.9,366.9 1410.1,366.5 1412.4,366.1 1414.7,365.7 1416.9,365.4 1419.2,365.0 1421.5,364.7 1423.7,364.4 1426.0,364.1 1428.3,363.8 1430.5,363.5 1432.8,363.2 1435.1,363.0 1437.3,362.8 1439.6,362.5 1441.9,362.3 1444.1,362.2 1446.4,362.0 1448.7,361.8 1450.9,361.7 1453.2,361.5 1455.5,361.4 1457.7,361.3 1460.0,361.2 1462.3,361.1 1464.5,361.1 1466.8,360.9 1469.1,360.7 1471.3,360.5 1473.6,360.3 1475.9,360.2 1478.1,360.0 1480.4,359.9 1482.7,359.7 1484.9,359.6 1487.2,359.5 1489.5,359.4 1491.7,359.4 1494.0,359.3 1496.3,359.2 1498.5,359.2 1500.8,359.2 1503.1,359.1 1505.3,359.1 1507.6,359.1 1509.9,359.1 1512.1,359.1 1514.4,359.1 1516.7,359.1 1518.9,359.2 1521.2,359.2 1523.5,359.3 1525.8,359.3 1528.0,359.1 1530.3,359.0 1532.6,358.8 1534.8,358.7 1537.1,358.5 1539.4,358.4 1541.6,358.3 1543.9,358.2 1546.2,358.1 1548.4,357.9 1550.7,357.8 1553.0,357.8 1555.2,357.7 1557.5,357.6 1559.8,357.5 1562.0,357.4 1564.3,357.3 1566.6,357.3 1568.8,357.2 1571.1,357.1 1573.4,357.0 1575.6,357.0 1577.9,356.9 1580.2,356.8 1582.4,356.8 1584.7,356.7 1587.0,356.7 1589.2,356.6 1591.5,356.6 1593.8,356.6 1596.0,356.5 1598.3,356.5 1600.6,356.5 1602.8,356.5 1605.1,356.4 1607.4,356.4 1609.6,356.4 1611.9,356.4 1614.2,356.4 1616.4,356.3 1618.7,356.3 1621.0,356.3 1623.2,356.3 1625.5,356.3 1627.8,356.3 1630.0,356.3 1632.3,356.3 1634.6,356.3 1636.8,356.3 1639.1,356.3 1641.4,356.3 1643.6,356.3 1645.9,356.3 1648.2,356.4 1650.4,356.5 1652.7,356.7 1655.0,356.8 1657.2,357.0 1659.5,357.1 1661.8,357.3 1664.0,357.5 1666.3,357.7 1668.6,357.9 1670.8,358.0 1673.1,358.3 1675.4,358.5 1677.6,358.8 1679.9,359.1 1682.2,359.4 1684.4,359.7 1686.7,360.0 1689.0,360.3 1691.2,360.7 1693.5,361.0 1695.8,361.4 1698.0,361.8 1700.3,362.2 1702.6,362.6 1704.8,363.1 1707.1,363.5 1709.4,364.2 1711.6,364.9 1713.9,365.6 1716.2,366.3 1718.4,367.1 1720.7,367.9 1723.0,368.8 1725.2,369.6 1727.5,370.5 1729.8,371.5 1732.0,372.4 1734.3,373.4 1736.6,374.5 1738.8,375.6 1741.1,376.7 1743.4,377.9 1745.6,379.1 1747.9,380.6 1750.2,382.2 1752.4,383.8 1754.7,385.5 1757.0,387.3 1759.2,389.1 1761.5,391.0 1763.8,392.9 1766.0,394.9 1768.3,397.0 1770.6,399.3 1772.8,401.7 1775.1,404.1 1777.4,406.6 1779.6,409.1 1781.9,411.7 1784.2,414.3 1786.4,417.0 1788.7,419.7 1791.0,422.5 1793.2,425.4 1795.5,428.3 1797.8,431.2 1800.0,434.2 1802.3,437.3 1804.6,440.4 1806.8,443.5 1809.1,446.7 1811.4,449.9 1813.6,453.2 1815.9,456.5 1818.2,459.8 1820.4,463.2 1822.7,466.7 1825.0,470.2 1827.2,473.7 1829.5,477.3 1831.8,481.1 1834.0,484.9 1836.3,488.7 1838.6,492.6 1840.8,496.5 1843.1,500.4 1845.4,504.4 1847.6,508.4 1849.9,512.4 1852.2,516.4 1854.4,520.5 1856.7,524.6 1859.0,528.7 1861.2,532.8 1863.5,537.0 1865.8,541.1 1868.0,545.3 1870.3,549.5 1872.6,553.8 1874.8,558.0 1877.1,562.3 1879.4,566.6 1881.6,570.9 1883.9,575.2 1886.2,579.6 1888.5,583.9" fill="none" stroke="#1c2466" stroke-width="2.1" stroke-dasharray="17 6"/><polyline clip-path="url(#plot)" points="981.7,888.8 984.0,881.8 986.2,874.8 988.5,867.9 990.8,861.1 993.0,854.3 995.3,847.6 997.6,841.0 999.8,834.4 1002.1,827.9 1004.4,821.5 1006.6,815.1 1008.9,808.8 1011.2,802.6 1013.4,796.4 1015.7,790.3 1018.0,784.2 1020.2,778.3 1022.5,772.3 1024.8,766.5 1027.0,760.7 1029.3,755.0 1031.6,749.4 1033.8,743.8 1036.1,738.2 1038.4,732.8 1040.6,727.4 1042.9,722.0 1045.2,716.6 1047.4,711.1 1049.7,705.8 1052.0,700.5 1054.2,695.3 1056.5,690.1 1058.8,685.0 1061.0,679.9 1063.3,674.9 1065.6,670.0 1067.8,665.1 1070.1,660.3 1072.4,655.6 1074.6,650.9 1076.9,646.2 1079.2,641.7 1081.4,637.1 1083.7,632.7 1086.0,628.3 1088.2,623.9 1090.5,619.6 1092.8,615.4 1095.0,611.2 1097.3,607.1 1099.6,603.0 1101.8,599.0 1104.1,595.1 1106.4,591.3 1108.6,587.5 1110.9,583.7 1113.2,580.1 1115.4,576.4 1117.7,572.8 1120.0,569.3 1122.2,565.8 1124.5,562.4 1126.8,559.0 1129.0,555.7 1131.3,552.4 1133.6,549.2 1135.8,546.0 1138.1,542.9 1140.4,539.8 1142.6,536.7 1144.9,533.7 1147.2,530.8 1149.4,527.9 1151.7,525.0 1154.0,522.2 1156.2,519.4 1158.5,516.7 1160.8,514.0 1163.1,511.3 1165.3,508.7 1167.6,506.2 1169.9,503.7 1172.1,501.2 1174.4,498.7 1176.7,496.3 1178.9,494.0 1181.2,491.7 1183.5,489.4 1185.7,487.1 1188.0,484.9 1190.3,482.7 1192.5,480.6 1194.8,478.5 1197.1,476.4 1199.3,474.4 1201.6,472.4 1203.9,470.4 1206.1,468.5 1208.4,466.5 1210.7,464.7 1212.9,462.8 1215.2,461.0 1217.5,459.2 1219.7,457.5 1222.0,455.7 1224.3,454.0 1226.5,452.4 1228.8,450.7 1231.1,449.1 1233.3,447.5 1235.6,445.9 1237.9,444.3 1240.1,442.8 1242.4,441.3 1244.7,439.8 1246.9,438.4 1249.2,437.0 1251.5,435.6 1253.7,434.2 1256.0,432.9 1258.3,431.6 1260.5,430.3 1262.8,429.0 1265.1,427.7 1267.3,426.5 1269.6,425.3 1271.9,424.1 1274.1,423.0 1276.4,421.8 1278.7,420.7 1280.9,419.6 1283.2,418.6 1285.5,417.5 1287.7,416.4 1290.0,415.3 1292.3,414.2 1294.5,413.1 1296.8,412.0 1299.1,411.0 1301.3,410.0 1303.6,409.0 1305.9,408.1 1308.1,407.1 1310.4,406.2 1312.7,405.3 1314.9,404.4 1317.2,403.5 1319.5,402.7 1321.7,401.9 1324.0,401.1 1326.3,400.3 1328.5,399.5 1330.8,398.7 1333.1,398.0 1335.3,397.3 1337.6,396.6 1339.9,395.9 1342.1,395.3 1344.4,394.6 1346.7,393.8 1348.9,393.0 1351.2,392.1 1353.5,391.4 1355.7,390.6 1358.0,389.9 1360.3,389.1 1362.5,388.4 1364.8,387.7 1367.1,387.1 1369.3,386.4 1371.6,385.8 1373.9,385.2 1376.1,384.6 1378.4,384.0 1380.7,383.5 1382.9,382.9 1385.2,382.4 1387.5,381.9 1389.7,381.4 1392.0,381.0 1394.3,380.5 1396.5,380.1 1398.8,379.7 1401.1,379.3 1403.3,378.9 1405.6,378.5 1407.9,377.9 1410.1,377.4 1412.4,376.9 1414.7,376.4 1416.9,375.9 1419.2,375.4 1421.5,375.0 1423.7,374.5 1426.0,374.1 1428.3,373.8 1430.5,373.4 1432.8,373.0 1435.1,372.7 1437.3,372.4 1439.6,372.1 1441.9,371.8 1444.1,371.5 1446.4,371.3 1448.7,371.0 1450.9,370.8 1453.2,370.6 1455.5,370.4 1457.7,370.3 1460.0,370.1 1462.3,370.0 1464.5,369.8 1466.8,369.6 1469.1,369.2 1471.3,368.9 1473.6,368.6 1475.9,368.3 1478.1,368.1 1480.4,367.8 1482.7,367.6 1484.9,367.4 1487.2,367.2 1489.5,367.0 1491.7,366.9 1494.0,366.7 1496.3,366.6 1498.5,366.5 1500.8,366.4 1503.1,366.3 1505.3,366.2 1507.6,366.1 1509.9,366.1 1512.1,366.0 1514.4,366.0 1516.7,366.0 1518.9,366.0 1521.2,366.0 1523.5,366.0 1525.8,366.0 1528.0,365.8 1530.3,365.5 1532.6,365.3 1534.8,365.1 1537.1,364.9 1539.4,364.8 1541.6,364.6 1543.9,364.5 1546.2,364.3 1548.4,364.2 1550.7,364.1 1553.0,364.0 1555.2,363.9 1557.5,363.8 1559.8,363.7 1562.0,363.6 1564.3,363.5 1566.6,363.4 1568.8,363.3 1571.1,363.3 1573.4,363.2 1575.6,363.2 1577.9,363.1 1580.2,363.1 1582.4,363.0 1584.7,363.0 1587.0,362.9 1589.2,362.9 1591.5,362.9 1593.8,362.9 1596.0,362.9 1598.3,363.0 1600.6,363.0 1602.8,363.0 1605.1,363.0 1607.4,363.0 1609.6,363.0 1611.9,363.0 1614.2,363.1 1616.4,363.1 1618.7,363.1 1621.0,363.2 1623.2,363.2 1625.5,363.2 1627.8,363.3 1630.0,363.3 1632.3,363.3 1634.6,363.4 1636.8,363.4 1639.1,363.5 1641.4,363.6 1643.6,363.6 1645.9,363.7 1648.2,363.9 1650.4,364.2 1652.7,364.4 1655.0,364.7 1657.2,365.0 1659.5,365.3 1661.8,365.7 1664.0,366.0 1666.3,366.3 1668.6,366.7 1670.8,367.0 1673.1,367.4 1675.4,367.9 1677.6,368.3 1679.9,368.7 1682.2,369.2 1684.4,369.7 1686.7,370.2 1689.0,370.7 1691.2,371.2 1693.5,371.7 1695.8,372.3 1698.0,372.9 1700.3,373.5 1702.6,374.1 1704.8,374.7 1707.1,375.3 1709.4,376.3 1711.6,377.3 1713.9,378.3 1716.2,379.3 1718.4,380.4 1720.7,381.5 1723.0,382.6 1725.2,383.8 1727.5,385.0 1729.8,386.2 1732.0,387.5 1734.3,388.8 1736.6,390.1 1738.8,391.5 1741.1,392.9 1743.4,394.3 1745.6,395.8 1747.9,397.3 1750.2,399.0 1752.4,400.7 1754.7,402.4 1757.0,404.1 1759.2,405.9 1761.5,407.8 1763.8,409.6 1766.0,411.6 1768.3,413.6 1770.6,415.9 1772.8,418.2 1775.1,420.6 1777.4,423.0 1779.6,425.4 1781.9,427.9 1784.2,430.5 1786.4,433.1 1788.7,435.7 1791.0,438.3 1793.2,441.1 1795.5,443.8 1797.8,446.6 1800.0,449.4 1802.3,452.3 1804.6,455.2 1806.8,458.2 1809.1,461.2 1811.4,464.2 1813.6,467.3 1815.9,470.4 1818.2,473.5 1820.4,476.7 1822.7,479.9 1825.0,483.2 1827.2,486.5 1829.5,490.0 1831.8,493.5 1834.0,497.1 1836.3,500.8 1838.6,504.4 1840.8,508.1 1843.1,511.9 1845.4,515.6 1847.6,519.4 1849.9,523.2 1852.2,527.0 1854.4,530.9 1856.7,534.8 1859.0,538.7 1861.2,542.6 1863.5,546.6 1865.8,550.6 1868.0,554.6 1870.3,558.6 1872.6,562.6 1874.8,566.7 1877.1,570.8 1879.4,574.8 1881.6,579.0 1883.9,583.1 1886.2,587.3 1888.5,591.4" fill="none" stroke="#1c1c66" stroke-width="2.1" stroke-dasharray="4 3"/><polyline clip-path="url(#plot)" points="981.7,936.4 984.0,929.7 986.2,923.0 988.5,916.4 990.8,909.8 993.0,903.3 995.3,896.8 997.6,890.3 999.8,884.0 1002.1,877.6 1004.4,871.3 1006.6,865.1 1008.9,858.9 1011.2,852.8 1013.4,846.7 1015.7,840.7 1018.0,834.7 1020.2,828.7 1022.5,822.9 1024.8,817.0 1027.0,811.2 1029.3,805.5 1031.6,799.8 1033.8,794.2 1036.1,788.6 1038.4,783.1 1040.6,777.6 1042.9,772.2 1045.2,766.9 1047.4,761.6 1049.7,756.4 1052.0,751.2 1054.2,746.1 1056.5,741.0 1058.8,736.0 1061.0,731.0 1063.3,726.1 1065.6,721.2 1067.8,716.4 1070.1,711.6 1072.4,706.9 1074.6,702.2 1076.9,697.6 1079.2,693.0 1081.4,688.5 1083.7,684.0 1086.0,679.6 1088.2,675.2 1090.5,670.8 1092.8,666.5 1095.0,662.3 1097.3,658.1 1099.6,653.9 1101.8,649.8 1104.1,645.8 1106.4,641.9 1108.6,638.0 1110.9,634.1 1113.2,630.3 1115.4,626.6 1117.7,622.8 1120.0,619.2 1122.2,615.5 1124.5,611.9 1126.8,608.4 1129.0,604.9 1131.3,601.4 1133.6,598.0 1135.8,594.6 1138.1,591.3 1140.4,588.0 1142.6,584.8 1144.9,581.5 1147.2,578.4 1149.4,575.2 1151.7,572.1 1154.0,569.1 1156.2,566.1 1158.5,563.1 1160.8,560.2 1163.1,557.3 1165.3,554.4 1167.6,551.6 1169.9,548.8 1172.1,546.1 1174.4,543.4 1176.7,540.7 1178.9,538.1 1181.2,535.5 1183.5,533.0 1185.7,530.4 1188.0,528.0 1190.3,525.5 1192.5,523.1 1194.8,520.7 1197.1,518.3 1199.3,516.0 1201.6,513.7 1203.9,511.5 1206.1,509.2 1208.4,507.0 1210.7,504.9 1212.9,502.7 1215.2,500.6 1217.5,498.6 1219.7,496.5 1222.0,494.5 1224.3,492.5 1226.5,490.5 1228.8,488.6 1231.1,486.7 1233.3,484.8 1235.6,482.9 1237.9,481.1 1240.1,479.2 1242.4,477.5 1244.7,475.7 1246.9,474.0 1249.2,472.3 1251.5,470.6 1253.7,469.0 1256.0,467.3 1258.3,465.7 1260.5,464.2 1262.8,462.6 1265.1,461.1 1267.3,459.6 1269.6,458.1 1271.9,456.7 1274.1,455.3 1276.4,453.9 1278.7,452.5 1280.9,451.2 1283.2,449.8 1285.5,448.5 1287.7,447.1 1290.0,445.7 1292.3,444.4 1294.5,443.0 1296.8,441.7 1299.1,440.5 1301.3,439.2 1303.6,438.0 1305.9,436.8 1308.1,435.6 1310.4,434.5 1312.7,433.3 1314.9,432.2 1317.2,431.1 1319.5,430.1 1321.7,429.0 1324.0,428.0 1326.3,427.0 1328.5,426.0 1330.8,425.1 1333.1,424.1 1335.3,423.2 1337.6,422.3 1339.9,421.4 1342.1,420.6 1344.4,419.8 1346.7,418.8 1348.9,417.8 1351.2,416.8 1353.5,415.8 1355.7,414.9 1358.0,414.0 1360.3,413.1 1362.5,412.3 1364.8,411.4 1367.1,410.6 1369.3,409.8 1371.6,409.1 1373.9,408.3 1376.1,407.6 1378.4,406.9 1380.7,406.2 1382.9,405.5 1385.2,404.9 1387.5,404.2 1389.7,403.6 1392.0,403.1 1394.3,402.5 1396.5,401.9 1398.8,401.4 1401.1,400.9 1403.3,400.4 1405.6,399.9 1407.9,399.1 1410.1,398.3 1412.4,397.6 1414.7,396.9 1416.9,396.2 1419.2,395.6 1421.5,394.9 1423.7,394.3 1426.0,393.7 1428.3,393.2 1430.5,392.6 1432.8,392.1 1435.1,391.6 1437.3,391.1 1439.6,390.7 1441.9,390.2 1444.1,389.8 1446.4,389.4 1448.7,389.0 1450.9,388.6 1453.2,388.3 1455.5,388.0 1457.7,387.7 1460.0,387.4 1462.3,387.1 1464.5,386.9 1466.8,386.4 1469.1,385.8 1471.3,385.3 1473.6,384.7 1475.9,384.2 1478.1,383.7 1480.4,383.2 1482.7,382.8 1484.9,382.4 1487.2,382.0 1489.5,381.6 1491.7,381.2 1494.0,380.9 1496.3,380.6 1498.5,380.3 1500.8,380.0 1503.1,379.8 1505.3,379.5 1507.6,379.3 1509.9,379.1 1512.1,378.9 1514.4,378.7 1516.7,378.6 1518.9,378.5 1521.2,378.4 1523.5,378.3 1525.8,378.2 1528.0,377.8 1530.3,377.5 1532.6,377.2 1534.8,376.9 1537.1,376.6 1539.4,376.4 1541.6,376.1 1543.9,375.9 1546.2,375.7 1548.4,375.5 1550.7,375.3 1553.0,375.1 1555.2,375.0 1557.5,374.8 1559.8,374.7 1562.0,374.6 1564.3,374.5 1566.6,374.4 1568.8,374.3 1571.1,374.2 1573.4,374.2 1575.6,374.1 1577.9,374.0 1580.2,374.0 1582.4,374.0 1584.7,373.9 1587.0,373.9 1589.2,373.9 1591.5,374.0 1593.8,374.0 1596.0,374.1 1598.3,374.1 1600.6,374.2 1602.8,374.3 1605.1,374.3 1607.4,374.4 1609.6,374.5 1611.9,374.5 1614.2,374.6 1616.4,374.7 1618.7,374.8 1621.0,374.9 1623.2,375.0 1625.5,375.1 1627.8,375.2 1630.0,375.3 1632.3,375.4 1634.6,375.5 1636.8,375.6 1639.1,375.8 1641.4,375.9 1643.6,376.0 1645.9,376.1 1648.2,376.5 1650.4,376.9 1652.7,377.4 1655.0,377.9 1657.2,378.4 1659.5,378.9 1661.8,379.4 1664.0,379.9 1666.3,380.4 1668.6,381.0 1670.8,381.5 1673.1,382.1 1675.4,382.7 1677.6,383.3 1679.9,383.9 1682.2,384.5 1684.4,385.1 1686.7,385.7 1689.0,386.4 1691.2,387.1 1693.5,387.8 1695.8,388.5 1698.0,389.2 1700.3,389.9 1702.6,390.7 1704.8,391.4 1707.1,392.2 1709.4,393.4 1711.6,394.7 1713.9,395.9 1716.2,397.2 1718.4,398.5 1720.7,399.9 1723.0,401.3 1725.2,402.7 1727.5,404.1 1729.8,405.6 1732.0,407.1 1734.3,408.6 1736.6,410.1 1738.8,411.7 1741.1,413.3 1743.4,415.0 1745.6,416.6 1747.9,418.3 1750.2,420.1 1752.4,421.8 1754.7,423.6 1757.0,425.5 1759.2,427.3 1761.5,429.2 1763.8,431.1 1766.0,433.1 1768.3,435.2 1770.6,437.6 1772.8,440.0 1775.1,442.4 1777.4,444.9 1779.6,447.4 1781.9,450.0 1784.2,452.5 1786.4,455.2 1788.7,457.8 1791.0,460.5 1793.2,463.2 1795.5,466.0 1797.8,468.7 1800.0,471.6 1802.3,474.4 1804.6,477.3 1806.8,480.2 1809.1,483.1 1811.4,486.1 1813.6,489.1 1815.9,492.2 1818.2,495.2 1820.4,498.3 1822.7,501.5 1825.0,504.6 1827.2,507.8 1829.5,511.2 1831.8,514.8 1834.0,518.3 1836.3,521.9 1838.6,525.5 1840.8,529.1 1843.1,532.7 1845.4,536.4 1847.6,540.1 1849.9,543.8 1852.2,547.6 1854.4,551.3 1856.7,555.1 1859.0,558.9 1861.2,562.7 1863.5,566.6 1865.8,570.4 1868.0,574.3 1870.3,578.2 1872.6,582.1 1874.8,586.1 1877.1,590.0 1879.4,594.0 1881.6,598.0 1883.9,602.0 1886.2,606.0 1888.5,610.1" fill="none" stroke="#2a2ac8" stroke-width="1.8" stroke-dasharray="4 3"/><circle cx="1672.5" cy="381.9" r="3.2" fill="#0a3a2a"/><text x="1370.6" y="393.4" font-size="26" fill="#111" font-family="Liberation Sans" transform="translate(1370.6,0) scale(0.97,1) translate(-1370.6,0)">BENEFICIOS</text><rect x="1668" y="938.4" width="9.2" height="8.6" fill="#178a86"/><path d="M1668.5 955 L1672.5 948.5 L1676.5 955 Z" fill="#111"/><rect x="1481" y="852.3" width="86.3" height="87.5" rx="9" ry="9" fill="#fff" stroke="#333" stroke-width="1.3"/><text x="1487.5" y="871.0" font-size="13.2" fill="#2a2a8a" font-family="Liberation Sans">T+18</text><line x1="1532" y1="866.5" x2="1560" y2="866.5" stroke="#25256e" stroke-width="1.6" /><text x="1487.5" y="886.5" font-size="13.2" fill="#2a2a8a" font-family="Liberation Sans">T+14</text><line x1="1532" y1="882.0" x2="1560" y2="882.0" stroke="#25256e" stroke-width="1.6" stroke-dasharray="14 8 4 100"/><text x="1487.5" y="902.0" font-size="13.2" fill="#2a2a8a" font-family="Liberation Sans">T+9</text><line x1="1532" y1="897.5" x2="1560" y2="897.5" stroke="#25256e" stroke-width="1.6" stroke-dasharray="14 8 4 100"/><text x="1487.5" y="917.5" font-size="13.2" fill="#2a2a8a" font-family="Liberation Sans">T+5</text><line x1="1532" y1="913.0" x2="1560" y2="913.0" stroke="#25256e" stroke-width="1.6" stroke-dasharray="4 3"/><text x="1487.5" y="933.0" font-size="13.2" fill="#2a2ad0" font-family="Liberation Sans">T+0</text><text x="1531" y="933.0" font-size="11" fill="#2a2ad0" font-family="Liberation Sans">*</text><line x1="1538" y1="928.5" x2="1560" y2="928.5" stroke="#2a2ac8" stroke-width="1.5" stroke-dasharray="4 3"/></svg>
<div style="position:absolute;left:895px;top:1009px;width:1067px;height:116px;background:#f0f0f0;border-top:1px solid #d8d8d8"></div>
<div class="t tv" style="left:906px;top:1013.9px;font-size:13.3px">P/L</div>
<div class="t tv" style="left:896.4px;width:100px;text-align:right;top:1013.9px;font-size:13.3px">-5.010</div>
<div class="t tv" style="left:956.8px;width:100px;text-align:right;top:1013.9px;font-size:13.3px">-3.448</div>
<div class="t tv" style="left:1017.3px;width:100px;text-align:right;top:1013.9px;font-size:13.3px">-2.241</div>
<div class="t tv" style="left:1077.8px;width:100px;text-align:right;top:1013.9px;font-size:13.3px">-1.364</div>
<div class="t tv" style="left:1138.2px;width:100px;text-align:right;top:1013.9px;font-size:13.3px">-748</div>
<div class="t tv" style="left:1198.7px;width:100px;text-align:right;top:1013.9px;font-size:13.3px">-327</div>
<div class="t tv" style="left:1259.1px;width:100px;text-align:right;top:1013.9px;font-size:13.3px">-42</div>
<div class="t tv" style="left:1319.5px;width:100px;text-align:right;top:1013.9px;font-size:13.3px">+147</div>
<div class="t tv" style="left:1380.0px;width:100px;text-align:right;top:1013.9px;font-size:13.3px">+275</div>
<div class="t tv" style="left:1440.5px;width:100px;text-align:right;top:1013.9px;font-size:13.3px">+358</div>
<div class="t tv" style="left:1500.9px;width:100px;text-align:right;top:1013.9px;font-size:13.3px">+399</div>
<div class="t tv" style="left:1561.3px;width:100px;text-align:right;top:1013.9px;font-size:13.3px">+377</div>
<div class="t tv" style="left:1621.8px;width:100px;text-align:right;top:1013.9px;font-size:13.3px">+223</div>
<div class="t tv" style="left:1682.2px;width:100px;text-align:right;top:1013.9px;font-size:13.3px">-183</div>
<div class="t tv" style="left:1742.7px;width:100px;text-align:right;top:1013.9px;font-size:13.3px">-899</div>
<div class="t tv" style="left:1803.2px;width:100px;text-align:right;top:1013.9px;font-size:13.3px">-1.872</div>
<div class="t tv" style="left:906px;top:1030.6px;font-size:13.3px">Delta</div>
<div class="t tv" style="left:896.4px;width:100px;text-align:right;top:1030.6px;font-size:13.3px">139,2</div>
<div class="t tv" style="left:956.8px;width:100px;text-align:right;top:1030.6px;font-size:13.3px">110,6</div>
<div class="t tv" style="left:1017.3px;width:100px;text-align:right;top:1030.6px;font-size:13.3px">83,0</div>
<div class="t tv" style="left:1077.8px;width:100px;text-align:right;top:1030.6px;font-size:13.3px">59,4</div>
<div class="t tv" style="left:1138.2px;width:100px;text-align:right;top:1030.6px;font-size:13.3px">41,1</div>
<div class="t tv" style="left:1198.7px;width:100px;text-align:right;top:1030.6px;font-size:13.3px">27,9</div>
<div class="t tv" style="left:1259.1px;width:100px;text-align:right;top:1030.6px;font-size:13.3px">18,7</div>
<div class="t tv" style="left:1319.5px;width:100px;text-align:right;top:1030.6px;font-size:13.3px">12,5</div>
<div class="t tv" style="left:1380.0px;width:100px;text-align:right;top:1030.6px;font-size:13.3px">8,4</div>
<div class="t tv" style="left:1440.5px;width:100px;text-align:right;top:1030.6px;font-size:13.3px">5,1</div>
<div class="t tv" style="left:1500.9px;width:100px;text-align:right;top:1030.6px;font-size:13.3px">0,9</div>
<div class="t tv" style="left:1561.3px;width:100px;text-align:right;top:1030.6px;font-size:13.3px">-6,7</div>
<div class="t tv" style="left:1621.8px;width:100px;text-align:right;top:1030.6px;font-size:13.3px">-21,9</div>
<div class="t tv" style="left:1682.2px;width:100px;text-align:right;top:1030.6px;font-size:13.3px">-44,9</div>
<div class="t tv" style="left:1742.7px;width:100px;text-align:right;top:1030.6px;font-size:13.3px">-67,9</div>
<div class="t tv" style="left:1803.2px;width:100px;text-align:right;top:1030.6px;font-size:13.3px">-84,0</div>
<div class="t tv" style="left:906px;top:1047.4px;font-size:13.3px">Gamma</div>
<div class="t tv" style="left:896.4px;width:100px;text-align:right;top:1047.4px;font-size:13.3px">-1,11</div>
<div class="t tv" style="left:956.8px;width:100px;text-align:right;top:1047.4px;font-size:13.3px">-1,16</div>
<div class="t tv" style="left:1017.3px;width:100px;text-align:right;top:1047.4px;font-size:13.3px">-1,04</div>
<div class="t tv" style="left:1077.8px;width:100px;text-align:right;top:1047.4px;font-size:13.3px">-0,84</div>
<div class="t tv" style="left:1138.2px;width:100px;text-align:right;top:1047.4px;font-size:13.3px">-0,63</div>
<div class="t tv" style="left:1198.7px;width:100px;text-align:right;top:1047.4px;font-size:13.3px">-0,44</div>
<div class="t tv" style="left:1259.1px;width:100px;text-align:right;top:1047.4px;font-size:13.3px">-0,30</div>
<div class="t tv" style="left:1319.5px;width:100px;text-align:right;top:1047.4px;font-size:13.3px">-0,20</div>
<div class="t tv" style="left:1380.0px;width:100px;text-align:right;top:1047.4px;font-size:13.3px">-0,14</div>
<div class="t tv" style="left:1440.5px;width:100px;text-align:right;top:1047.4px;font-size:13.3px">-0,13</div>
<div class="t tv" style="left:1500.9px;width:100px;text-align:right;top:1047.4px;font-size:13.3px">-0,20</div>
<div class="t tv" style="left:1561.3px;width:100px;text-align:right;top:1047.4px;font-size:13.3px">-0,42</div>
<div class="t tv" style="left:1621.8px;width:100px;text-align:right;top:1047.4px;font-size:13.3px">-0,80</div>
<div class="t tv" style="left:1682.2px;width:100px;text-align:right;top:1047.4px;font-size:13.3px">-1,01</div>
<div class="t tv" style="left:1742.7px;width:100px;text-align:right;top:1047.4px;font-size:13.3px">-0,81</div>
<div class="t tv" style="left:1803.2px;width:100px;text-align:right;top:1047.4px;font-size:13.3px">-0,48</div>
<div class="t tv" style="left:906px;top:1064.1px;font-size:13.3px">Theta</div>
<div class="t tv" style="left:896.4px;width:100px;text-align:right;top:1064.1px;font-size:13.3px">72,24</div>
<div class="t tv" style="left:956.8px;width:100px;text-align:right;top:1064.1px;font-size:13.3px">87,50</div>
<div class="t tv" style="left:1017.3px;width:100px;text-align:right;top:1064.1px;font-size:13.3px">94,11</div>
<div class="t tv" style="left:1077.8px;width:100px;text-align:right;top:1064.1px;font-size:13.3px">92,23</div>
<div class="t tv" style="left:1138.2px;width:100px;text-align:right;top:1064.1px;font-size:13.3px">84,51</div>
<div class="t tv" style="left:1198.7px;width:100px;text-align:right;top:1064.1px;font-size:13.3px">74,04</div>
<div class="t tv" style="left:1259.1px;width:100px;text-align:right;top:1064.1px;font-size:13.3px">63,20</div>
<div class="t tv" style="left:1319.5px;width:100px;text-align:right;top:1064.1px;font-size:13.3px">53,28</div>
<div class="t tv" style="left:1380.0px;width:100px;text-align:right;top:1064.1px;font-size:13.3px">44,83</div>
<div class="t tv" style="left:1440.5px;width:100px;text-align:right;top:1064.1px;font-size:13.3px">38,04</div>
<div class="t tv" style="left:1500.9px;width:100px;text-align:right;top:1064.1px;font-size:13.3px">33,99</div>
<div class="t tv" style="left:1561.3px;width:100px;text-align:right;top:1064.1px;font-size:13.3px">33,87</div>
<div class="t tv" style="left:1621.8px;width:100px;text-align:right;top:1064.1px;font-size:13.3px">37,66</div>
<div class="t tv" style="left:1682.2px;width:100px;text-align:right;top:1064.1px;font-size:13.3px">41,54</div>
<div class="t tv" style="left:1742.7px;width:100px;text-align:right;top:1064.1px;font-size:13.3px">41,06</div>
<div class="t tv" style="left:1803.2px;width:100px;text-align:right;top:1064.1px;font-size:13.3px">37,61</div>
<div class="t tv" style="left:906px;top:1080.9px;font-size:13.3px">Vega</div>
<div class="t tv" style="left:896.4px;width:100px;text-align:right;top:1080.9px;font-size:13.3px">-140,1</div>
<div class="t tv" style="left:956.8px;width:100px;text-align:right;top:1080.9px;font-size:13.3px">-165,2</div>
<div class="t tv" style="left:1017.3px;width:100px;text-align:right;top:1080.9px;font-size:13.3px">-172,0</div>
<div class="t tv" style="left:1077.8px;width:100px;text-align:right;top:1080.9px;font-size:13.3px">-163,0</div>
<div class="t tv" style="left:1138.2px;width:100px;text-align:right;top:1080.9px;font-size:13.3px">-144,7</div>
<div class="t tv" style="left:1198.7px;width:100px;text-align:right;top:1080.9px;font-size:13.3px">-123,2</div>
<div class="t tv" style="left:1259.1px;width:100px;text-align:right;top:1080.9px;font-size:13.3px">-102,9</div>
<div class="t tv" style="left:1319.5px;width:100px;text-align:right;top:1080.9px;font-size:13.3px">-85,8</div>
<div class="t tv" style="left:1380.0px;width:100px;text-align:right;top:1080.9px;font-size:13.3px">-72,6</div>
<div class="t tv" style="left:1440.5px;width:100px;text-align:right;top:1080.9px;font-size:13.3px">-63,8</div>
<div class="t tv" style="left:1500.9px;width:100px;text-align:right;top:1080.9px;font-size:13.3px">-62,2</div>
<div class="t tv" style="left:1561.3px;width:100px;text-align:right;top:1080.9px;font-size:13.3px">-72,6</div>
<div class="t tv" style="left:1621.8px;width:100px;text-align:right;top:1080.9px;font-size:13.3px">-94,4</div>
<div class="t tv" style="left:1682.2px;width:100px;text-align:right;top:1080.9px;font-size:13.3px">-110,9</div>
<div class="t tv" style="left:1742.7px;width:100px;text-align:right;top:1080.9px;font-size:13.3px">-106,3</div>
<div class="t tv" style="left:1803.2px;width:100px;text-align:right;top:1080.9px;font-size:13.3px">-89,2</div>
<div class="t tv" style="left:906px;top:1097.6px;font-size:13.3px">Maint</div>
<div class="t tv" style="left:896.4px;width:100px;text-align:right;top:1097.6px;font-size:13.3px">17,64K</div>
<div class="t tv" style="left:956.8px;width:100px;text-align:right;top:1097.6px;font-size:13.3px">11,38K</div>
<div class="t tv" style="left:1017.3px;width:100px;text-align:right;top:1097.6px;font-size:13.3px">9.750</div>
<div class="t tv" style="left:1077.8px;width:100px;text-align:right;top:1097.6px;font-size:13.3px">8.336</div>
<div class="t tv" style="left:1138.2px;width:100px;text-align:right;top:1097.6px;font-size:13.3px">7.100</div>
<div class="t tv" style="left:1198.7px;width:100px;text-align:right;top:1097.6px;font-size:13.3px">6.000</div>
<div class="t tv" style="left:1259.1px;width:100px;text-align:right;top:1097.6px;font-size:13.3px">5.006</div>
<div class="t tv" style="left:1319.5px;width:100px;text-align:right;top:1097.6px;font-size:13.3px">4.101</div>
<div class="t tv" style="left:1380.0px;width:100px;text-align:right;top:1097.6px;font-size:13.3px">3.282</div>
<div class="t tv" style="left:1440.5px;width:100px;text-align:right;top:1097.6px;font-size:13.3px">2.552</div>
<div class="t tv" style="left:1500.9px;width:100px;text-align:right;top:1097.6px;font-size:13.3px">2.194</div>
<div class="t tv" style="left:1561.3px;width:100px;text-align:right;top:1097.6px;font-size:13.3px">2.621</div>
<div class="t tv" style="left:1621.8px;width:100px;text-align:right;top:1097.6px;font-size:13.3px">3.138</div>
<div class="t tv" style="left:1682.2px;width:100px;text-align:right;top:1097.6px;font-size:13.3px">3.821</div>
<div class="t tv" style="left:1742.7px;width:100px;text-align:right;top:1097.6px;font-size:13.3px">4.714</div>
<div class="t tv" style="left:1803.2px;width:100px;text-align:right;top:1097.6px;font-size:13.3px">5.778</div>
<div class="btn" style="left:1932px;top:1019.5px;width:19.5px;height:15.5px;border-radius:2px"></div><div class="t" style="left:1936px;top:1016px;font-size:9px">...</div>
<div class="btn" style="left:1932px;top:1044px;width:19.5px;height:18px;border-radius:2px"></div><div class="t" style="left:1932px;width:19.5px;text-align:center;top:1043px;font-size:13px">D</div>
<div style="position:absolute;left:1963px;top:89px;width:6px;height:1036px;background:#b9d1e6"></div><div style="position:absolute;left:1967px;top:89px;width:2px;height:1036px;background:#e6eef6"></div>
</body></html>
